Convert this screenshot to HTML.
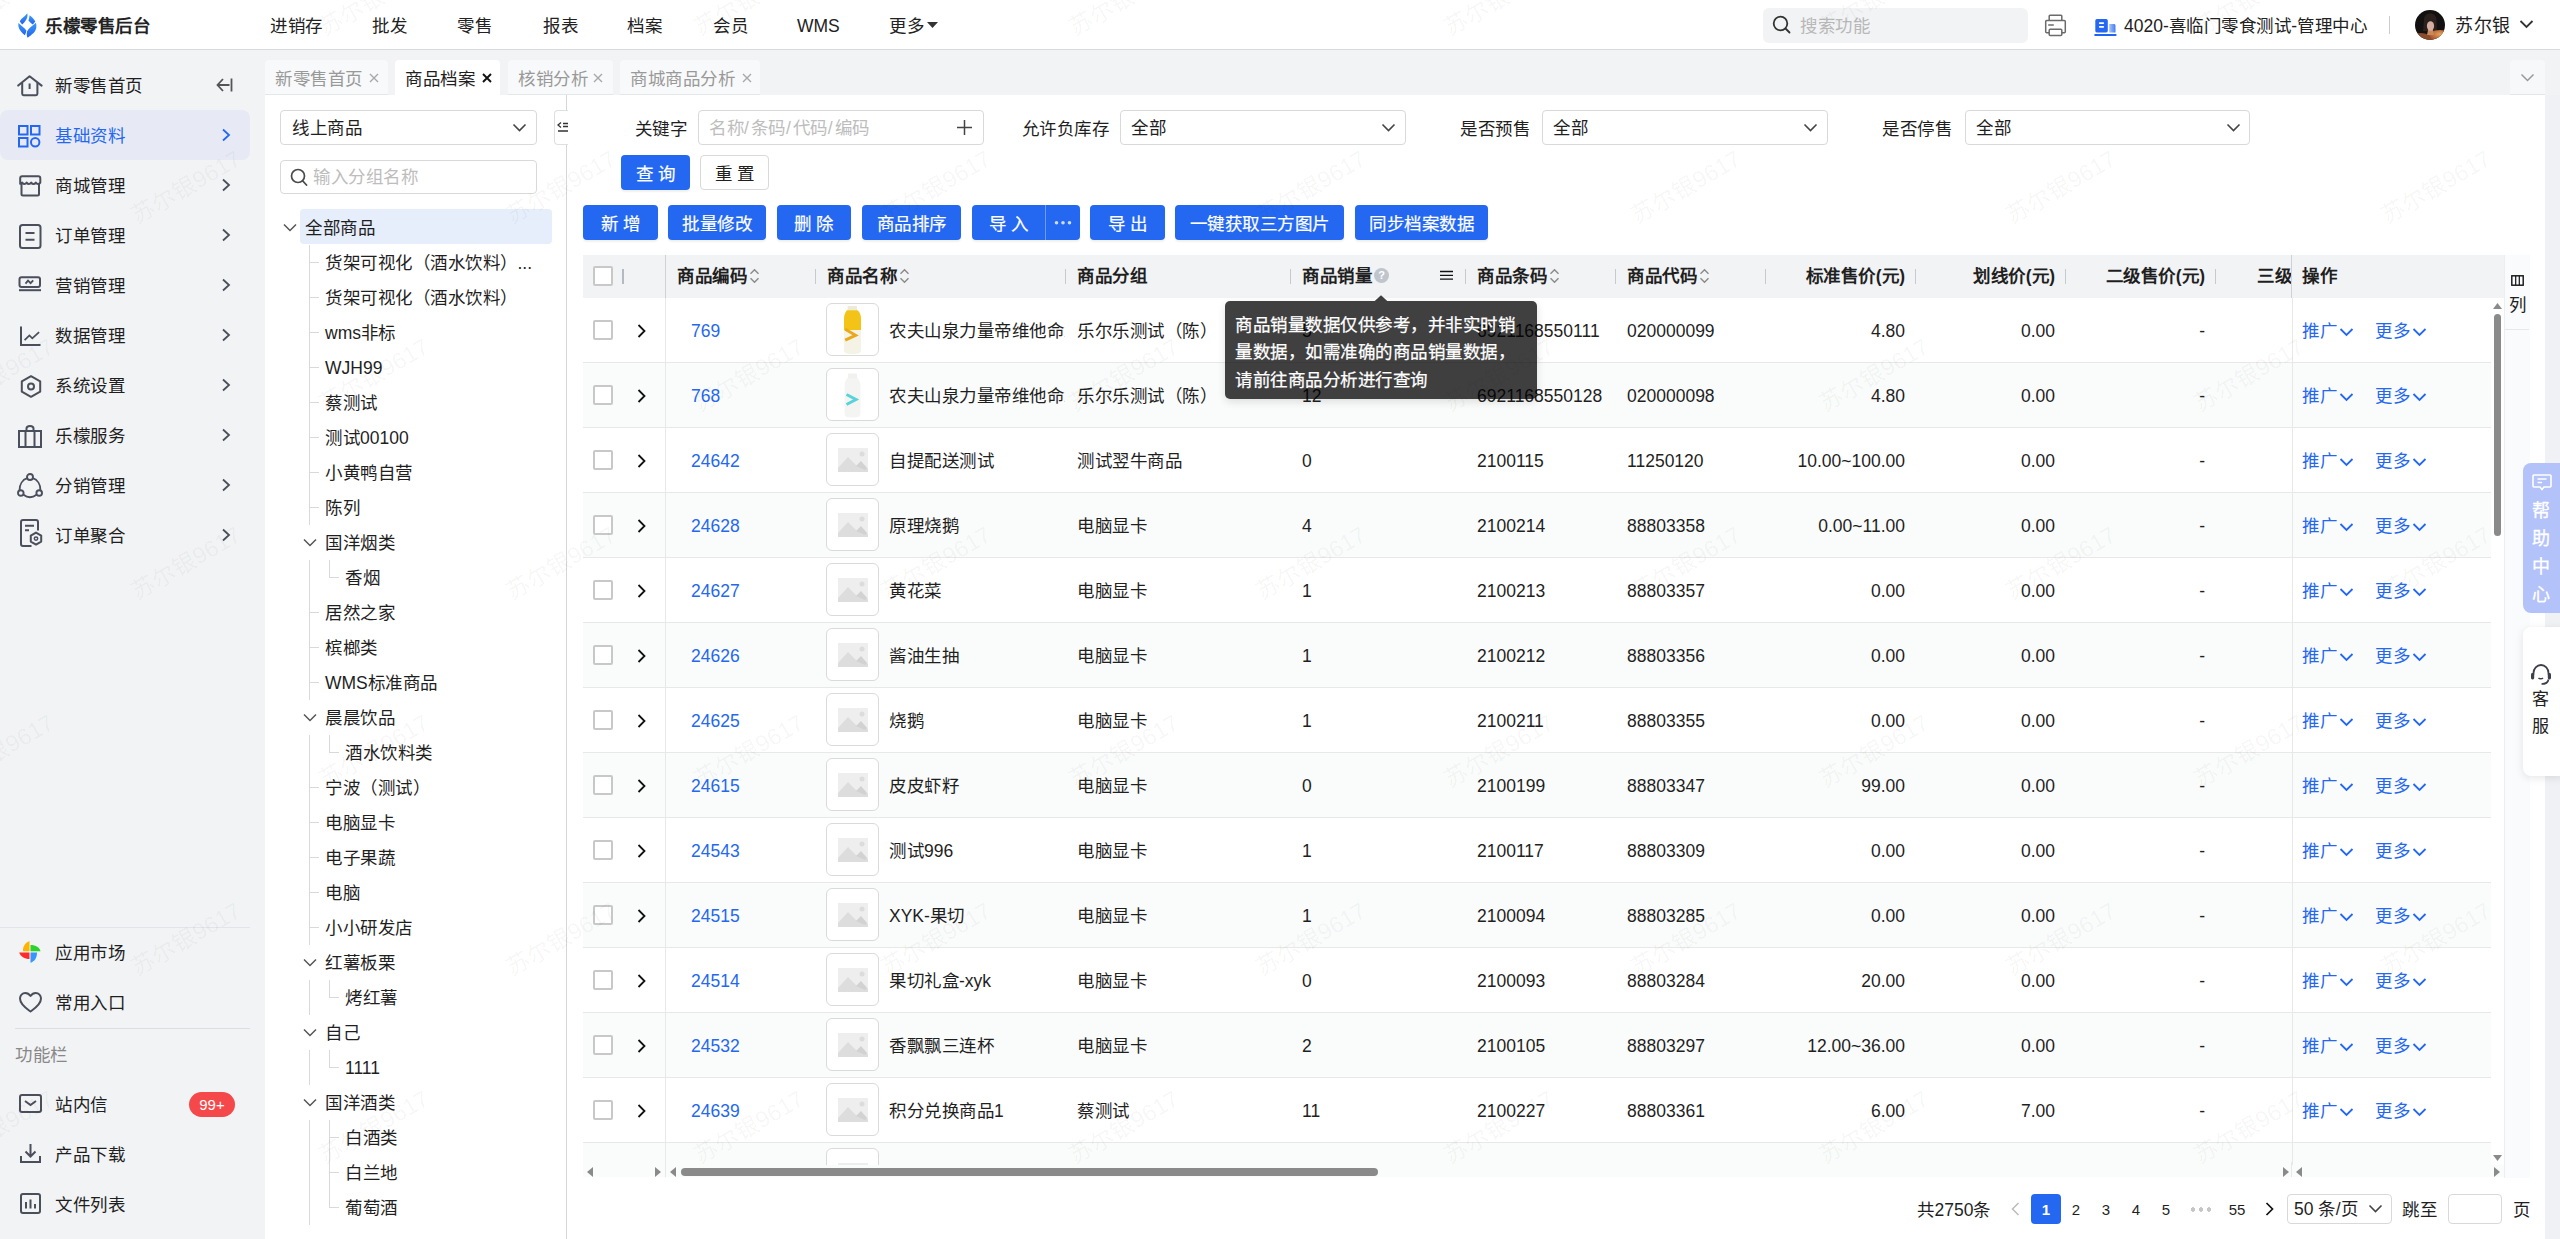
<!DOCTYPE html>
<html lang="zh-CN"><head><meta charset="utf-8">
<style>
*{box-sizing:border-box;margin:0;padding:0}
html,body{width:2560px;height:1239px;overflow:hidden;background:#f2f3f5;font-family:"Liberation Sans",sans-serif;font-size:17.5px;color:#1f1f1f}
.abs{position:absolute}
svg{display:block}
/* header */
#hdr{position:absolute;left:0;top:0;width:2560px;height:50px;background:#fff;border-bottom:1px solid #d9dadd}
.nav{position:absolute;top:0;height:49px;line-height:52px;font-size:17.5px;color:#222}
/* sidebar */
#side{position:absolute;left:0;top:50px;width:250px;height:1189px;background:#f2f3f5}
.mi{position:absolute;left:0;width:250px;height:50px;line-height:50px;font-size:17.5px;color:#1f1f1f}
.mi .ic{position:absolute;left:18px;top:14px}
.mi .tx{position:absolute;left:55px;top:1px}
.mi .ch{position:absolute;left:221px;top:18px}
.mi.act{background:#e7eaf5;border-radius:8px;color:#2468f2}
/* tabs */
.tab{position:absolute;top:60px;height:35px;line-height:38px;font-size:17.5px;color:#999;background:#f8f9fa;border-radius:4px 4px 0 0;border-bottom:1px solid #e4e6ea;padding-left:10px}
.tab.act{background:#fff;color:#1f1f1f;border-bottom:none}
.tab .x{position:absolute;top:0;font-size:18px}
/* content */
#content{position:absolute;left:265px;top:95px;width:2280px;height:1144px;background:#fff}
.inp{position:absolute;height:35px;border:1px solid #d9d9d9;border-radius:4px;background:#fff;font-size:17.5px;line-height:35px}
.btn{position:absolute;top:205px;height:35px;line-height:38px;background:#2468f2;color:#fff;-webkit-text-stroke:0.2px #fff;border-radius:4px;text-align:center;font-size:17.5px;box-shadow:0 2px 2px rgba(0,0,0,.06)}
.tree{position:absolute;height:35px;line-height:37px;font-size:17.5px;color:#1f1f1f;white-space:nowrap}
.vl{position:absolute;width:1px;background:#d9d9d9}
.hl{position:absolute;height:1px;background:#d9d9d9}
.c{letter-spacing:0.5px}
</style></head><body>

<!-- HEADER -->
<div id="hdr">
  <svg class="abs" style="left:18px;top:13px" width="20" height="25" viewBox="0 0 20 25"><defs><linearGradient id="lg" x1="0" y1="0" x2="0" y2="1"><stop offset="0" stop-color="#3d9bf8"/><stop offset="1" stop-color="#2262f0"/></linearGradient></defs>
<path d="M9.2 0.3C9.9 2.2 9.5 4.6 8.3 6.6C7 8.8 5.6 10.5 4.2 11.5L1.8 8.4C2.6 6.6 4.5 5 6.5 3.3C7.8 2.1 8.6 1.1 9.2 0.3Z" fill="url(#lg)"/>
<path d="M11.6 2.3C13.6 4 16.1 6.1 17.3 8.4L14.8 11.5C13 10.3 11.5 9 10.5 7.5C11 5.8 11.4 4 11.6 2.3Z" fill="url(#lg)"/>
<path d="M0.3 10C2.6 12 6.1 14.5 8.4 17.5C8.2 19.3 7.5 21 6.8 22.3C3.6 19.6 1 16.6 0.4 13.2Z" fill="url(#lg)"/>
<path d="M17.9 9.8C18.9 13 18.6 17 15.6 19.9C13.6 21.8 11 23.4 9.7 24.8C8.7 23.5 8.5 20.6 9 18.5C10.6 15.4 13.6 13.4 17.9 9.8Z" fill="url(#lg)"/></svg>
  <div class="abs" style="left:45px;top:0;line-height:52px;font-size:17.5px;font-weight:bold;color:#222"><span class="c">乐檬零售后台</span></div>
  <div class="nav" style="left:270px"><span class="c">进销存</span></div>
  <div class="nav" style="left:372px"><span class="c">批发</span></div>
  <div class="nav" style="left:457px"><span class="c">零售</span></div>
  <div class="nav" style="left:543px"><span class="c">报表</span></div>
  <div class="nav" style="left:627px"><span class="c">档案</span></div>
  <div class="nav" style="left:713px"><span class="c">会员</span></div>
  <div class="nav" style="left:797px">WMS</div>
  <div class="nav" style="left:889px"><span class="c">更多</span></div>
  <svg class="abs" style="left:927px;top:22px" width="11" height="6" viewBox="0 0 11 6"><path d="M0 0H11L5.5 6Z" fill="#333"/></svg>

  <div class="abs" style="left:1763px;top:8px;width:265px;height:35px;background:#f2f3f5;border-radius:6px"></div>
  <svg class="abs" style="left:1772px;top:15px" width="20" height="20" viewBox="0 0 20 20"><circle cx="8.5" cy="8.5" r="6.8" fill="none" stroke="#333" stroke-width="1.8"/><path d="M13.5 13.5L17.5 17.5" stroke="#333" stroke-width="1.8" stroke-linecap="round"/></svg>
  <div class="abs" style="left:1800px;top:0;line-height:52px;color:#b8b8b8"><span class="c">搜索功能</span></div>

  <svg class="abs" style="left:2044px;top:13px" width="24" height="24" viewBox="0 0 24 24"><path d="M5.2 7.3V3C5.2 2.5 5.6 2.2 6 2.2H17C17.4 2.2 17.8 2.5 17.8 3V7.3" fill="none" stroke="#6b6b6b" stroke-width="1.5"/><path d="M5 19.8H2.7C2 19.8 1.7 19.4 1.7 18.8V8.6C1.7 8 2.1 7.6 2.7 7.6H20.3C20.9 7.6 21.3 8 21.3 8.6V18.8C21.3 19.4 21 19.8 20.3 19.8H18" fill="none" stroke="#6b6b6b" stroke-width="1.5"/><rect x="5.2" y="16.2" width="12.6" height="6.3" rx="1" fill="none" stroke="#6b6b6b" stroke-width="1.5"/><path d="M4.2 12H9.8" stroke="#6b6b6b" stroke-width="1.5"/></svg>
  <svg class="abs" style="left:2094px;top:15px" width="24" height="22" viewBox="0 0 24 22"><defs><linearGradient id="sg" x1="0" y1="0" x2="1" y2="0"><stop offset="0" stop-color="#a9c4fb"/><stop offset="1" stop-color="#3f7ef5"/></linearGradient></defs><rect x="1.3" y="4.1" width="12.5" height="13.3" rx="1.6" fill="#2367f2"/><rect x="4.9" y="7.3" width="5.2" height="1.7" rx="0.8" fill="#fff"/><rect x="4.9" y="11" width="5.2" height="1.7" rx="0.8" fill="#fff"/><path d="M15.2 9H20C20.9 9 21.5 9.6 21.5 10.5V17.4H15.2Z" fill="url(#sg)"/><rect x="0.2" y="19" width="22.4" height="2" rx="1" fill="#1f63f2"/></svg>
  <div class="abs" style="left:2124px;top:0;line-height:52px;color:#222">4020-<span class="c">喜临门零食测试</span>-<span class="c">管理中心</span></div>
  <div class="abs" style="left:2389px;top:16px;width:1px;height:18px;background:#ccc"></div>
  <svg class="abs" style="left:2415px;top:10px" width="30" height="30" viewBox="0 0 30 30"><defs><clipPath id="avc"><circle cx="15" cy="15" r="15"/></clipPath><radialGradient id="avs" cx="0.5" cy="0.3" r="0.7"><stop offset="0" stop-color="#e7a35a"/><stop offset="0.6" stop-color="#a8552f"/><stop offset="1" stop-color="#5a2a18"/></radialGradient></defs><g clip-path="url(#avc)"><rect width="30" height="30" fill="#121010"/><path d="M9 10C9 5 12 3.5 15 3.5C19 3.5 22 6 21.5 11L22 21H8Z" fill="#2a201c"/><ellipse cx="25" cy="27" rx="13" ry="7" fill="url(#avs)"/><ellipse cx="6" cy="29" rx="10" ry="6" fill="#8a4a2c"/><path d="M13 20H18L19 25H12Z" fill="#c88a5a"/><ellipse cx="15.5" cy="16" rx="3.6" ry="4.8" fill="#d6ada3"/><path d="M11.5 12.5C12.5 9.5 18.5 9.5 19.5 12.5L19.5 11C18 8 13 8 11.5 11Z" fill="#2a201c"/></g></svg>
  <div class="abs" style="left:2455px;top:0;line-height:52px;color:#222;font-size:18px"><span class="c">苏尔银</span></div>
  <svg class="abs" style="left:2519px;top:19px" width="15" height="10" viewBox="0 0 15 10"><path d="M1.5 2L7.5 8L13.5 2" fill="none" stroke="#333" stroke-width="1.8"/></svg>
</div>

<!-- SIDEBAR -->
<div id="side">
<div class="mi" style="top:10px"><svg class="ic" style="top:15px;left:17px" width="26" height="22" viewBox="0 0 26 22"><path d="M1.2 10.6L12.6 1.2L24.6 10.6" fill="none" stroke="#4b4e5b" stroke-width="2" stroke-linejoin="round" stroke-linecap="round"/><path d="M5.2 8V18.8C5.2 19.6 5.8 20.2 6.6 20.2H19C19.8 20.2 20.4 19.6 20.4 18.8V8" fill="none" stroke="#4b4e5b" stroke-width="2"/><path d="M12.6 8.5V14" stroke="#4b4e5b" stroke-width="2"/></svg><span class="tx"><span class="c">新零售首页</span></span></div>
<div class="mi act" style="top:60px"><svg class="ic" style="top:15px;left:18px" width="23" height="23" viewBox="0 0 23 23"><rect x="1" y="1" width="8.5" height="8.5" fill="none" stroke="#2468f2" stroke-width="2"/><rect x="13" y="1" width="8.5" height="8.5" fill="none" stroke="#2468f2" stroke-width="2"/><rect x="1" y="13" width="8.5" height="8.5" fill="none" stroke="#2468f2" stroke-width="2"/><circle cx="17.2" cy="17.2" r="4.2" fill="none" stroke="#2468f2" stroke-width="2"/></svg><span class="tx"><span class="c">基础资料</span></span><svg class="ch" width="10" height="14" viewBox="0 0 10 14"><path d="M2 1.5L8 7L2 12.5" fill="none" stroke="#2468f2" stroke-width="1.8"/></svg></div>
<div class="mi" style="top:110px"><svg class="ic" style="top:15px;left:19px" width="23" height="22" viewBox="0 0 23 22"><path d="M2.5 8V19C2.5 20 3 20.5 4 20.5H18.5C19.5 20.5 20 20 20 19V8" fill="none" stroke="#4b4e5b" stroke-width="2"/><path d="M1.2 3.2C1.2 2 2 1.2 3.2 1.2H19.3C20.5 1.2 21.3 2 21.3 3.2V7.6C20 9.6 18 9.6 16.8 7.6C15.5 9.6 13.5 9.6 12.2 7.6C11 9.6 9 9.6 7.7 7.6C6.5 9.6 4.5 9.6 3.2 7.6L1.2 8.8Z" fill="none" stroke="#4b4e5b" stroke-width="2" stroke-linejoin="round"/></svg><span class="tx"><span class="c">商城管理</span></span><svg class="ch" width="10" height="14" viewBox="0 0 10 14"><path d="M2 1.5L8 7L2 12.5" fill="none" stroke="#4b4e5b" stroke-width="1.8"/></svg></div>
<div class="mi" style="top:160px"><svg class="ic" style="top:14px;left:19px" width="23" height="25" viewBox="0 0 23 25"><rect x="1" y="1" width="20.5" height="23" rx="2.5" fill="none" stroke="#4b4e5b" stroke-width="2"/><path d="M6.5 9H15.5M6.5 15.8H15.5" stroke="#4b4e5b" stroke-width="2"/></svg><span class="tx"><span class="c">订单管理</span></span><svg class="ch" width="10" height="14" viewBox="0 0 10 14"><path d="M2 1.5L8 7L2 12.5" fill="none" stroke="#4b4e5b" stroke-width="1.8"/></svg></div>
<div class="mi" style="top:210px"><svg class="ic" style="top:16px;left:18px" width="24" height="16" viewBox="0 0 24 16"><rect x="1.5" y="1.3" width="20.5" height="9.6" rx="2" fill="none" stroke="#4b4e5b" stroke-width="2"/><path d="M1 14.2H23" stroke="#4b4e5b" stroke-width="2"/><path d="M7.5 7.6L10 4.6L12.6 7.2L15.2 4.4" fill="none" stroke="#4b4e5b" stroke-width="1.8"/></svg><span class="tx"><span class="c">营销管理</span></span><svg class="ch" width="10" height="14" viewBox="0 0 10 14"><path d="M2 1.5L8 7L2 12.5" fill="none" stroke="#4b4e5b" stroke-width="1.8"/></svg></div>
<div class="mi" style="top:260px"><svg class="ic" style="top:16px;left:20px" width="21" height="21" viewBox="0 0 21 21"><path d="M1 0.6V19.1H20.5" fill="none" stroke="#4b4e5b" stroke-width="2"/><path d="M4.6 14.2L9.4 9.4L12.3 12.3L19.1 6.1" fill="none" stroke="#4b4e5b" stroke-width="1.8"/></svg><span class="tx"><span class="c">数据管理</span></span><svg class="ch" width="10" height="14" viewBox="0 0 10 14"><path d="M2 1.5L8 7L2 12.5" fill="none" stroke="#4b4e5b" stroke-width="1.8"/></svg></div>
<div class="mi" style="top:310px"><svg class="ic" style="top:15px;left:19.5px" width="22" height="23" viewBox="0 0 22 23"><path d="M11 1.2L20.2 6.3V16.7L11 21.8L1.8 16.7V6.3Z" fill="none" stroke="#4b4e5b" stroke-width="2" stroke-linejoin="round"/><circle cx="11" cy="11.5" r="3" fill="none" stroke="#4b4e5b" stroke-width="2"/></svg><span class="tx"><span class="c">系统设置</span></span><svg class="ch" width="10" height="14" viewBox="0 0 10 14"><path d="M2 1.5L8 7L2 12.5" fill="none" stroke="#4b4e5b" stroke-width="1.8"/></svg></div>
<div class="mi" style="top:360px"><svg class="ic" style="top:15px;left:18px" width="24" height="23" viewBox="0 0 24 23"><rect x="1" y="6" width="22" height="16" fill="none" stroke="#4b4e5b" stroke-width="2"/><path d="M7.5 6V22M16.5 6V22" stroke="#4b4e5b" stroke-width="2"/><path d="M8.5 6V3.5C8.5 2 10 1 12 1C14 1 15.5 2 15.5 3.5V6" fill="none" stroke="#4b4e5b" stroke-width="2"/></svg><span class="tx"><span class="c">乐檬服务</span></span><svg class="ch" width="10" height="14" viewBox="0 0 10 14"><path d="M2 1.5L8 7L2 12.5" fill="none" stroke="#4b4e5b" stroke-width="1.8"/></svg></div>
<div class="mi" style="top:410px"><svg class="ic" style="top:13px;left:17px" width="26" height="26" viewBox="0 0 26 26"><circle cx="13" cy="4" r="3" fill="none" stroke="#4b4e5b" stroke-width="1.9"/><circle cx="3.8" cy="20" r="2.8" fill="none" stroke="#4b4e5b" stroke-width="1.9"/><circle cx="22.2" cy="20" r="2.8" fill="none" stroke="#4b4e5b" stroke-width="1.9"/><path d="M10.2 5.2C5.5 6.8 2.5 11.5 2.6 17.2M15.8 5.2C20.5 6.8 23.5 11.5 23.4 17.2M6.5 21.8C10.5 24.8 15.5 24.8 19.5 21.8" fill="none" stroke="#4b4e5b" stroke-width="1.9"/></svg><span class="tx"><span class="c">分销管理</span></span><svg class="ch" width="10" height="14" viewBox="0 0 10 14"><path d="M2 1.5L8 7L2 12.5" fill="none" stroke="#4b4e5b" stroke-width="1.8"/></svg></div>
<div class="mi" style="top:460px"><svg class="ic" style="top:9px;left:19.5px" width="23" height="29" viewBox="0 0 23 29"><path d="M11.5 27H3C1.8 27 1 26.2 1 25V3C1 1.8 1.8 1 3 1H16C17.2 1 18 1.8 18 3V11.5" fill="none" stroke="#4b4e5b" stroke-width="2"/><path d="M5 6.8H14M5 11.2H9" stroke="#4b4e5b" stroke-width="2"/><path d="M16 13.6L21.2 16.6V22.6L16 25.6L10.8 22.6V16.6Z" fill="none" stroke="#4b4e5b" stroke-width="2" stroke-linejoin="round"/><circle cx="16" cy="19.6" r="1.7" fill="none" stroke="#4b4e5b" stroke-width="1.5"/></svg><span class="tx"><span class="c">订单聚合</span></span><svg class="ch" width="10" height="14" viewBox="0 0 10 14"><path d="M2 1.5L8 7L2 12.5" fill="none" stroke="#4b4e5b" stroke-width="1.8"/></svg></div>
<svg class="abs" style="left:216px;top:28px" width="17" height="14" viewBox="0 0 17 14"><path d="M7 1L1.5 7L7 13M1.5 7H13.5M15.5 0.5V13.5" fill="none" stroke="#555" stroke-width="1.8"/></svg>
<div class="abs" style="left:0;top:877px;width:250px;height:1px;background:#e2e4e9"></div>
<div class="mi" style="top:877px"><svg class="ic" style="top:14px;left:19px" width="22" height="22" viewBox="0 0 22 22"><path d="M10.5 0V10.2H3.9C3.9 5 6.5 1.5 10.5 0Z" fill="#ffb300"/><path d="M11.5 4V10.2H21.5C20.5 6.5 17 4 11.5 4Z" fill="#2ad42a"/><path d="M18 11.5H11.5V21.7C15.5 20.5 18 17 18 11.5Z" fill="#3596fe"/><path d="M0.2 11.5H10.5V18C5.5 18 1.5 15.5 0.2 11.5Z" fill="#ff2b2b"/></svg><span class="tx"><span class="c">应用市场</span></span></div>
<div class="mi" style="top:927px"><svg class="ic" style="top:15px;left:19px" width="23" height="21" viewBox="0 0 23 21"><path d="M11.5 19.5C8 17 1 12.5 1 6.5C1 3.5 3.3 1 6.3 1C8.5 1 10.3 2.3 11.5 4C12.7 2.3 14.5 1 16.7 1C19.7 1 22 3.5 22 6.5C22 12.5 15 17 11.5 19.5Z" fill="none" stroke="#4b4e5b" stroke-width="2" stroke-linejoin="round"/></svg><span class="tx"><span class="c">常用入口</span></span></div>
<div class="abs" style="left:15px;top:978px;width:235px;height:1px;background:#dcdee3"></div>
<div class="abs" style="left:15px;top:980px;line-height:50px;color:#888;font-size:17.5px"><span class="c">功能栏</span></div>
<div class="mi" style="top:1029px"><svg class="ic" style="top:15px;left:19px" width="23" height="19" viewBox="0 0 23 19"><rect x="1" y="1" width="21" height="17" rx="2" fill="none" stroke="#4b4e5b" stroke-width="2"/><path d="M6 7L11.5 11L17 7" fill="none" stroke="#4b4e5b" stroke-width="2"/></svg><span class="tx"><span class="c">站内信</span></span><div class="abs" style="left:189px;top:13px;width:46px;height:25px;border-radius:13px;background:#f5484a;color:#fff;font-size:15px;line-height:25px;text-align:center">99+</div></div>
<div class="mi" style="top:1079px"><svg class="ic" style="top:14px;left:20px" width="21" height="21" viewBox="0 0 21 21"><path d="M10.5 1V13M5.5 8.5L10.5 13.5L15.5 8.5" fill="none" stroke="#4b4e5b" stroke-width="2"/><path d="M1 13V19H20V13" fill="none" stroke="#4b4e5b" stroke-width="2"/></svg><span class="tx"><span class="c">产品下载</span></span></div>
<div class="mi" style="top:1129px"><svg class="ic" style="top:14px;left:20px" width="21" height="21" viewBox="0 0 21 21"><rect x="1" y="1" width="19" height="19" rx="2" fill="none" stroke="#4b4e5b" stroke-width="2"/><path d="M6 9V15.5M10.5 6.5V15.5M15 11V15.5" stroke="#4b4e5b" stroke-width="2"/></svg><span class="tx"><span class="c">文件列表</span></span></div>
</div>

<!-- TABS -->
<div class="tab" style="left:265px;width:123px"><span class="c">新零售首页</span></div>
<div class="tab act" style="left:395px;width:105px"><span class="c">商品档案</span></div>
<div class="tab" style="left:508px;width:105px"><span class="c">核销分析</span></div>
<div class="tab" style="left:620px;width:140px"><span class="c">商城商品分析</span></div>
<svg class="abs" style="left:369px;top:73px" width="10" height="10" viewBox="0 0 10 10"><path d="M1 1L9 9M9 1L1 9" stroke="#a8a8a8" stroke-width="1.4"/></svg><svg class="abs" style="left:482px;top:73px" width="10" height="10" viewBox="0 0 10 10"><path d="M1 1L9 9M9 1L1 9" stroke="#111" stroke-width="1.9"/></svg><svg class="abs" style="left:593px;top:73px" width="10" height="10" viewBox="0 0 10 10"><path d="M1 1L9 9M9 1L1 9" stroke="#a8a8a8" stroke-width="1.4"/></svg><svg class="abs" style="left:742px;top:73px" width="10" height="10" viewBox="0 0 10 10"><path d="M1 1L9 9M9 1L1 9" stroke="#a8a8a8" stroke-width="1.4"/></svg>
<div class="abs" style="left:2510px;top:60px;width:35px;height:35px;background:#f7f8fa;border-radius:4px 4px 0 0;border-bottom:1px solid #e4e6ea"></div>
<svg class="abs" style="left:2520px;top:73px" width="15" height="9" viewBox="0 0 15 9"><path d="M1.5 1.5L7.5 7.5L13.5 1.5" fill="none" stroke="#999" stroke-width="1.5"/></svg>

<!-- CONTENT -->
<div id="content"></div>
<div class="abs" style="left:566px;top:95px;width:1px;height:1144px;background:#d6d6d6"></div>
<div class="inp" style="left:280px;top:110px;width:257px"><span class="abs" style="left:11px;top:0"><span class="c">线上商品</span></span><svg class="abs" style="left:231px;top:12px" width="15" height="9" viewBox="0 0 15 9"><path d="M1.5 1.5L7.5 7.5L13.5 1.5" fill="none" stroke="#444" stroke-width="1.6"/></svg></div>
<div class="abs" style="left:554px;top:110px;width:14px;height:35px;background:#fff;border:1px solid #dcdfe6;border-right:none;border-radius:4px 0 0 4px"></div>
<svg class="abs" style="left:557px;top:121px" width="11" height="12" viewBox="0 0 11 12"><path d="M4 1.5L1 4L4 6.5" fill="none" stroke="#333" stroke-width="1.3"/><path d="M6 2.5H11M6 5.5H11M1 10H11" stroke="#333" stroke-width="1.5"/></svg>
<div class="inp" style="left:280px;top:160px;width:257px;height:34px"></div>
<svg class="abs" style="left:290px;top:168px" width="18" height="19" viewBox="0 0 18 19"><circle cx="8" cy="8" r="6.5" fill="none" stroke="#4a4a4a" stroke-width="1.7"/><path d="M12.8 13L16.5 17" stroke="#4a4a4a" stroke-width="1.8" stroke-linecap="round"/></svg>
<div class="abs" style="left:313px;top:160px;line-height:34px;color:#bdbdbd"><span class="c">输入分组名称</span></div>
<div class="abs" style="left:300px;top:209px;width:252px;height:35px;background:#e6edfb;border-radius:4px"></div>
<svg class="abs" style="left:283px;top:223px" width="14" height="9" viewBox="0 0 14 9"><path d="M1 1.5L7 7.5L13 1.5" fill="none" stroke="#555" stroke-width="1.5"/></svg>
<div class="tree" style="left:305px;top:210px"><span class="c">全部商品</span></div>
<div class="vl" style="left:309px;top:245px;height:35px;background:#d9d9d9"></div>
<div class="hl" style="left:310px;top:262px;width:9px;background:#d9d9d9"></div>
<div class="tree" style="left:325px;top:245px"><span class="c">货架可视化（酒水饮料）</span>...</div>
<div class="vl" style="left:309px;top:280px;height:35px;background:#d9d9d9"></div>
<div class="hl" style="left:310px;top:297px;width:9px;background:#d9d9d9"></div>
<div class="tree" style="left:325px;top:280px"><span class="c">货架可视化（酒水饮料）</span></div>
<div class="vl" style="left:309px;top:315px;height:35px;background:#d9d9d9"></div>
<div class="hl" style="left:310px;top:332px;width:9px;background:#d9d9d9"></div>
<div class="tree" style="left:325px;top:315px">wms<span class="c">非标</span></div>
<div class="vl" style="left:309px;top:350px;height:35px;background:#d9d9d9"></div>
<div class="hl" style="left:310px;top:367px;width:9px;background:#d9d9d9"></div>
<div class="tree" style="left:325px;top:350px">WJH99</div>
<div class="vl" style="left:309px;top:385px;height:35px;background:#d9d9d9"></div>
<div class="hl" style="left:310px;top:402px;width:9px;background:#d9d9d9"></div>
<div class="tree" style="left:325px;top:385px"><span class="c">蔡测试</span></div>
<div class="vl" style="left:309px;top:420px;height:35px;background:#d9d9d9"></div>
<div class="hl" style="left:310px;top:437px;width:9px;background:#d9d9d9"></div>
<div class="tree" style="left:325px;top:420px"><span class="c">测试</span>00100</div>
<div class="vl" style="left:309px;top:455px;height:35px;background:#d9d9d9"></div>
<div class="hl" style="left:310px;top:472px;width:9px;background:#d9d9d9"></div>
<div class="tree" style="left:325px;top:455px"><span class="c">小黄鸭自营</span></div>
<div class="vl" style="left:309px;top:490px;height:35px;background:#d9d9d9"></div>
<div class="hl" style="left:310px;top:507px;width:9px;background:#d9d9d9"></div>
<div class="tree" style="left:325px;top:490px"><span class="c">陈列</span></div>
<svg class="abs" style="left:303px;top:538px" width="14" height="9" viewBox="0 0 14 9"><path d="M1 1.5L7 7.5L13 1.5" fill="none" stroke="#555" stroke-width="1.5"/></svg>
<div class="tree" style="left:325px;top:525px"><span class="c">国洋烟类</span></div>
<div class="vl" style="left:309px;top:560px;height:35px;background:#d9d9d9"></div>
<div class="vl" style="left:329px;top:560px;height:18px;background:#d9d9d9"></div>
<div class="hl" style="left:330px;top:577px;width:9px;background:#d9d9d9"></div>
<div class="tree" style="left:345px;top:560px"><span class="c">香烟</span></div>
<div class="vl" style="left:309px;top:595px;height:35px;background:#d9d9d9"></div>
<div class="hl" style="left:310px;top:612px;width:9px;background:#d9d9d9"></div>
<div class="tree" style="left:325px;top:595px"><span class="c">居然之家</span></div>
<div class="vl" style="left:309px;top:630px;height:35px;background:#d9d9d9"></div>
<div class="hl" style="left:310px;top:647px;width:9px;background:#d9d9d9"></div>
<div class="tree" style="left:325px;top:630px"><span class="c">槟榔类</span></div>
<div class="vl" style="left:309px;top:665px;height:35px;background:#d9d9d9"></div>
<div class="hl" style="left:310px;top:682px;width:9px;background:#d9d9d9"></div>
<div class="tree" style="left:325px;top:665px">WMS<span class="c">标准商品</span></div>
<svg class="abs" style="left:303px;top:713px" width="14" height="9" viewBox="0 0 14 9"><path d="M1 1.5L7 7.5L13 1.5" fill="none" stroke="#555" stroke-width="1.5"/></svg>
<div class="tree" style="left:325px;top:700px"><span class="c">晨晨饮品</span></div>
<div class="vl" style="left:309px;top:735px;height:35px;background:#d9d9d9"></div>
<div class="vl" style="left:329px;top:735px;height:18px;background:#d9d9d9"></div>
<div class="hl" style="left:330px;top:752px;width:9px;background:#d9d9d9"></div>
<div class="tree" style="left:345px;top:735px"><span class="c">酒水饮料类</span></div>
<div class="vl" style="left:309px;top:770px;height:35px;background:#d9d9d9"></div>
<div class="hl" style="left:310px;top:787px;width:9px;background:#d9d9d9"></div>
<div class="tree" style="left:325px;top:770px"><span class="c">宁波（测试）</span></div>
<div class="vl" style="left:309px;top:805px;height:35px;background:#d9d9d9"></div>
<div class="hl" style="left:310px;top:822px;width:9px;background:#d9d9d9"></div>
<div class="tree" style="left:325px;top:805px"><span class="c">电脑显卡</span></div>
<div class="vl" style="left:309px;top:840px;height:35px;background:#d9d9d9"></div>
<div class="hl" style="left:310px;top:857px;width:9px;background:#d9d9d9"></div>
<div class="tree" style="left:325px;top:840px"><span class="c">电子果蔬</span></div>
<div class="vl" style="left:309px;top:875px;height:35px;background:#d9d9d9"></div>
<div class="hl" style="left:310px;top:892px;width:9px;background:#d9d9d9"></div>
<div class="tree" style="left:325px;top:875px"><span class="c">电脑</span></div>
<div class="vl" style="left:309px;top:910px;height:35px;background:#d9d9d9"></div>
<div class="hl" style="left:310px;top:927px;width:9px;background:#d9d9d9"></div>
<div class="tree" style="left:325px;top:910px"><span class="c">小小研发店</span></div>
<svg class="abs" style="left:303px;top:958px" width="14" height="9" viewBox="0 0 14 9"><path d="M1 1.5L7 7.5L13 1.5" fill="none" stroke="#555" stroke-width="1.5"/></svg>
<div class="tree" style="left:325px;top:945px"><span class="c">红薯板栗</span></div>
<div class="vl" style="left:309px;top:980px;height:35px;background:#d9d9d9"></div>
<div class="vl" style="left:329px;top:980px;height:18px;background:#d9d9d9"></div>
<div class="hl" style="left:330px;top:997px;width:9px;background:#d9d9d9"></div>
<div class="tree" style="left:345px;top:980px"><span class="c">烤红薯</span></div>
<svg class="abs" style="left:303px;top:1028px" width="14" height="9" viewBox="0 0 14 9"><path d="M1 1.5L7 7.5L13 1.5" fill="none" stroke="#555" stroke-width="1.5"/></svg>
<div class="tree" style="left:325px;top:1015px"><span class="c">自己</span></div>
<div class="vl" style="left:309px;top:1050px;height:35px;background:#d9d9d9"></div>
<div class="vl" style="left:329px;top:1050px;height:18px;background:#d9d9d9"></div>
<div class="hl" style="left:330px;top:1067px;width:9px;background:#d9d9d9"></div>
<div class="tree" style="left:345px;top:1050px">1111</div>
<svg class="abs" style="left:303px;top:1098px" width="14" height="9" viewBox="0 0 14 9"><path d="M1 1.5L7 7.5L13 1.5" fill="none" stroke="#555" stroke-width="1.5"/></svg>
<div class="tree" style="left:325px;top:1085px"><span class="c">国洋酒类</span></div>
<div class="vl" style="left:309px;top:1120px;height:35px;background:#d9d9d9"></div>
<div class="vl" style="left:329px;top:1120px;height:35px;background:#d9d9d9"></div>
<div class="hl" style="left:330px;top:1137px;width:9px;background:#d9d9d9"></div>
<div class="tree" style="left:345px;top:1120px"><span class="c">白酒类</span></div>
<div class="vl" style="left:309px;top:1155px;height:35px;background:#d9d9d9"></div>
<div class="vl" style="left:329px;top:1155px;height:35px;background:#d9d9d9"></div>
<div class="hl" style="left:330px;top:1172px;width:9px;background:#d9d9d9"></div>
<div class="tree" style="left:345px;top:1155px"><span class="c">白兰地</span></div>
<div class="vl" style="left:309px;top:1190px;height:35px;background:#d9d9d9"></div>
<div class="vl" style="left:329px;top:1190px;height:18px;background:#d9d9d9"></div>
<div class="hl" style="left:330px;top:1207px;width:9px;background:#d9d9d9"></div>
<div class="tree" style="left:345px;top:1190px"><span class="c">葡萄酒</span></div>
<div class="abs" style="left:487px;width:200px;text-align:right;top:112px;line-height:35px"><span class="c">关键字</span></div>
<div class="inp" style="left:698px;top:110px;width:286px"><span class="abs" style="left:10px;top:0;color:#bdbdbd"><span class="c">名称</span><span style="letter-spacing:2px">/</span><span class="c">条码</span><span style="letter-spacing:2px">/</span><span class="c">代码</span><span style="letter-spacing:2px">/</span><span class="c">编码</span></span></div>
<svg class="abs" style="left:957px;top:120px" width="15" height="15" viewBox="0 0 15 15"><path d="M7.5 0V15M0 7.5H15" stroke="#444" stroke-width="1.5"/></svg>
<div class="abs" style="left:909px;width:200px;text-align:right;top:112px;line-height:35px"><span class="c">允许负库存</span></div>
<div class="inp" style="left:1120px;top:110px;width:286px"><span class="abs" style="left:10px;top:0"><span class="c">全部</span></span></div>
<svg class="abs" style="left:1381px;top:123px" width="15" height="9" viewBox="0 0 15 9"><path d="M1.5 1.5L7.5 7.5L13.5 1.5" fill="none" stroke="#444" stroke-width="1.6"/></svg>
<div class="abs" style="left:1330px;width:200px;text-align:right;top:112px;line-height:35px"><span class="c">是否预售</span></div>
<div class="inp" style="left:1542px;top:110px;width:286px"><span class="abs" style="left:10px;top:0"><span class="c">全部</span></span></div>
<svg class="abs" style="left:1803px;top:123px" width="15" height="9" viewBox="0 0 15 9"><path d="M1.5 1.5L7.5 7.5L13.5 1.5" fill="none" stroke="#444" stroke-width="1.6"/></svg>
<div class="abs" style="left:1752px;width:200px;text-align:right;top:112px;line-height:35px"><span class="c">是否停售</span></div>
<div class="inp" style="left:1965px;top:110px;width:285px"><span class="abs" style="left:10px;top:0"><span class="c">全部</span></span></div>
<svg class="abs" style="left:2226px;top:123px" width="15" height="9" viewBox="0 0 15 9"><path d="M1.5 1.5L7.5 7.5L13.5 1.5" fill="none" stroke="#444" stroke-width="1.6"/></svg>
<div class="btn" style="left:621px;top:155px;width:69px"><span class="c">查</span> <span class="c">询</span></div>
<div class="btn" style="left:700px;top:155px;width:69px;background:#fff;color:#1f1f1f;border:1px solid #d9d9d9;line-height:36px;box-shadow:none;-webkit-text-stroke:0"><span class="c">重</span> <span class="c">置</span></div>
<div class="btn" style="left:583px;width:75px"><span class="c">新</span> <span class="c">增</span></div>
<div class="btn" style="left:668px;width:98px"><span class="c">批量修改</span></div>
<div class="btn" style="left:777px;width:74px"><span class="c">删</span> <span class="c">除</span></div>
<div class="btn" style="left:862px;width:99px"><span class="c">商品排序</span></div>
<div class="btn" style="left:972px;width:73px;border-radius:4px 0 0 4px"><span class="c">导</span> <span class="c">入</span></div>
<div class="btn" style="left:1090px;width:75px"><span class="c">导</span> <span class="c">出</span></div>
<div class="btn" style="left:1175px;width:169px"><span class="c">一键获取三方图片</span></div>
<div class="btn" style="left:1355px;width:133px"><span class="c">同步档案数据</span></div>
<div class="btn" style="left:1045px;width:35px;border-radius:0 4px 4px 0;border-left:1px solid #6d9cf6"></div>
<svg class="abs" style="left:1052px;top:219px" width="22" height="8" viewBox="0 0 22 8"><circle cx="4.5" cy="3.8" r="1.8" fill="#cddbfb"/><circle cx="11" cy="3.8" r="1.8" fill="#cddbfb"/><circle cx="17.5" cy="3.8" r="1.8" fill="#cddbfb"/></svg>

<div class="abs" style="left:583px;top:255px;width:1921px;height:43px;background:#f2f3f5"></div>
<div class="abs" style="left:583px;top:298px;width:1908px;height:867px;overflow:hidden">
<div class="abs" style="left:0;top:0px;width:1908px;height:65px;background:#fff;border-bottom:1px solid #e8e8e8"></div>
<div class="abs" style="left:10px;top:22px;width:20px;height:20px;border:2px solid #c8c8c8;border-radius:2px;background:#fff"></div>
<svg class="abs" style="left:54px;top:26px" width="10" height="14" viewBox="0 0 10 14"><path d="M1.5 1L7.5 7L1.5 13" fill="none" stroke="#111" stroke-width="1.8"/></svg>
<div style="top:1px;line-height:65px;white-space:nowrap;position:absolute;left:108px;color:#2468f2">769</div>
<div class="abs" style="left:243px;top:5px;width:53px;height:53px;border:1px solid #dadada;border-radius:6px;background:#fff;overflow:hidden"><svg class="abs" style="left:13px;top:1px" width="26" height="50" viewBox="0 0 26 50"><rect x="7.6" y="0.9" width="9.4" height="5" rx="1.2" fill="#ecead8"/><path d="M7 5.3H17.5C20 7.5 21 10.5 21 14V45.5C21 48 18.5 49 12.5 49C6.5 49 4 48 4 45.5V14C4 10.5 5 7.5 7 5.3Z" fill="#f5f3e6"/><path d="M7 5.3H17.5C20 7.5 21 10.5 21 14V25H4V14C4 10.5 5 7.5 7 5.3Z" fill="#f3c417"/><path d="M5.2 24.3L15.6 30.3L5.2 35.2" fill="none" stroke="#e9a91a" stroke-width="3"/></svg></div>
<div style="top:1px;line-height:65px;white-space:nowrap;position:absolute;left:306px;width:176px;overflow:hidden"><span class="c">农夫山泉力量帝维他命水</span></div>
<div style="top:1px;line-height:65px;white-space:nowrap;position:absolute;left:494px;width:200px;overflow:hidden"><span class="c">乐尔乐测试（陈）</span></div>
<div style="top:1px;line-height:65px;white-space:nowrap;position:absolute;left:719px">5</div>
<div style="top:1px;line-height:65px;white-space:nowrap;position:absolute;left:894px">6921168550111</div>
<div style="top:1px;line-height:65px;white-space:nowrap;position:absolute;left:1044px">020000099</div>
<div style="top:1px;line-height:65px;white-space:nowrap;position:absolute;left:1122px;width:200px;text-align:right">4.80</div>
<div style="top:1px;line-height:65px;white-space:nowrap;position:absolute;left:1272px;width:200px;text-align:right">0.00</div>
<div style="top:1px;line-height:65px;white-space:nowrap;position:absolute;left:1422px;width:200px;text-align:right">-</div>
<div style="top:1px;line-height:65px;white-space:nowrap;position:absolute;left:1719px;color:#2468f2"><span class="c">推广</span></div>
<svg class="abs" style="left:1756px;top:29px" width="15" height="10" viewBox="0 0 15 10"><path d="M1.5 2L7.5 8L13.5 2" fill="none" stroke="#2468f2" stroke-width="1.8"/></svg>
<div style="top:1px;line-height:65px;white-space:nowrap;position:absolute;left:1792px;color:#2468f2"><span class="c">更多</span></div>
<svg class="abs" style="left:1829px;top:29px" width="15" height="10" viewBox="0 0 15 10"><path d="M1.5 2L7.5 8L13.5 2" fill="none" stroke="#2468f2" stroke-width="1.8"/></svg>
<div class="abs" style="left:0;top:65px;width:1908px;height:65px;background:#fafbfb;border-bottom:1px solid #e8e8e8"></div>
<div class="abs" style="left:10px;top:87px;width:20px;height:20px;border:2px solid #c8c8c8;border-radius:2px;background:#fff"></div>
<svg class="abs" style="left:54px;top:91px" width="10" height="14" viewBox="0 0 10 14"><path d="M1.5 1L7.5 7L1.5 13" fill="none" stroke="#111" stroke-width="1.8"/></svg>
<div style="top:66px;line-height:65px;white-space:nowrap;position:absolute;left:108px;color:#2468f2">768</div>
<div class="abs" style="left:243px;top:70px;width:53px;height:53px;border:1px solid #dadada;border-radius:6px;background:#fff;overflow:hidden"><svg class="abs" style="left:13px;top:1px" width="26" height="50" viewBox="0 0 26 50"><rect x="8" y="3.5" width="9" height="5" rx="1.2" fill="#f1f1ef"/><path d="M7.5 8H17.5C19.5 10 20.5 13 20.5 16V44C20.5 46.5 18 47.5 12.5 47.5C7 47.5 4.5 46.5 4.5 44V16C4.5 13 5.5 10 7.5 8Z" fill="#f4f5f3"/><path d="M6.5 24.5L16 29.5L6.5 34.5" fill="none" stroke="#58d3d9" stroke-width="3"/></svg></div>
<div style="top:66px;line-height:65px;white-space:nowrap;position:absolute;left:306px;width:176px;overflow:hidden"><span class="c">农夫山泉力量帝维他命水</span></div>
<div style="top:66px;line-height:65px;white-space:nowrap;position:absolute;left:494px;width:200px;overflow:hidden"><span class="c">乐尔乐测试（陈）</span></div>
<div style="top:66px;line-height:65px;white-space:nowrap;position:absolute;left:719px">12</div>
<div style="top:66px;line-height:65px;white-space:nowrap;position:absolute;left:894px">6921168550128</div>
<div style="top:66px;line-height:65px;white-space:nowrap;position:absolute;left:1044px">020000098</div>
<div style="top:66px;line-height:65px;white-space:nowrap;position:absolute;left:1122px;width:200px;text-align:right">4.80</div>
<div style="top:66px;line-height:65px;white-space:nowrap;position:absolute;left:1272px;width:200px;text-align:right">0.00</div>
<div style="top:66px;line-height:65px;white-space:nowrap;position:absolute;left:1422px;width:200px;text-align:right">-</div>
<div style="top:66px;line-height:65px;white-space:nowrap;position:absolute;left:1719px;color:#2468f2"><span class="c">推广</span></div>
<svg class="abs" style="left:1756px;top:94px" width="15" height="10" viewBox="0 0 15 10"><path d="M1.5 2L7.5 8L13.5 2" fill="none" stroke="#2468f2" stroke-width="1.8"/></svg>
<div style="top:66px;line-height:65px;white-space:nowrap;position:absolute;left:1792px;color:#2468f2"><span class="c">更多</span></div>
<svg class="abs" style="left:1829px;top:94px" width="15" height="10" viewBox="0 0 15 10"><path d="M1.5 2L7.5 8L13.5 2" fill="none" stroke="#2468f2" stroke-width="1.8"/></svg>
<div class="abs" style="left:0;top:130px;width:1908px;height:65px;background:#fff;border-bottom:1px solid #e8e8e8"></div>
<div class="abs" style="left:10px;top:152px;width:20px;height:20px;border:2px solid #c8c8c8;border-radius:2px;background:#fff"></div>
<svg class="abs" style="left:54px;top:156px" width="10" height="14" viewBox="0 0 10 14"><path d="M1.5 1L7.5 7L1.5 13" fill="none" stroke="#111" stroke-width="1.8"/></svg>
<div style="top:131px;line-height:65px;white-space:nowrap;position:absolute;left:108px;color:#2468f2">24642</div>
<div class="abs" style="left:243px;top:135px;width:53px;height:53px;border:1px solid #dadada;border-radius:6px;background:#fff;overflow:hidden"><svg class="abs" style="left:11px;top:14px" width="30" height="24" viewBox="0 0 30 24"><rect width="30" height="24" fill="#eeeeee"/><path d="M0 20L10 9L19 18L23 14L30 21V24H0Z" fill="#dddddd"/><path d="M18 18L23 13L29 20L27 22Z" fill="#d2d2d2"/><circle cx="24" cy="6" r="2.5" fill="#dcdcdc"/></svg></div>
<div style="top:131px;line-height:65px;white-space:nowrap;position:absolute;left:306px;width:176px;overflow:hidden"><span class="c">自提配送测试</span></div>
<div style="top:131px;line-height:65px;white-space:nowrap;position:absolute;left:494px;width:200px;overflow:hidden"><span class="c">测试翌牛商品</span></div>
<div style="top:131px;line-height:65px;white-space:nowrap;position:absolute;left:719px">0</div>
<div style="top:131px;line-height:65px;white-space:nowrap;position:absolute;left:894px">2100115</div>
<div style="top:131px;line-height:65px;white-space:nowrap;position:absolute;left:1044px">11250120</div>
<div style="top:131px;line-height:65px;white-space:nowrap;position:absolute;left:1122px;width:200px;text-align:right">10.00~100.00</div>
<div style="top:131px;line-height:65px;white-space:nowrap;position:absolute;left:1272px;width:200px;text-align:right">0.00</div>
<div style="top:131px;line-height:65px;white-space:nowrap;position:absolute;left:1422px;width:200px;text-align:right">-</div>
<div style="top:131px;line-height:65px;white-space:nowrap;position:absolute;left:1719px;color:#2468f2"><span class="c">推广</span></div>
<svg class="abs" style="left:1756px;top:159px" width="15" height="10" viewBox="0 0 15 10"><path d="M1.5 2L7.5 8L13.5 2" fill="none" stroke="#2468f2" stroke-width="1.8"/></svg>
<div style="top:131px;line-height:65px;white-space:nowrap;position:absolute;left:1792px;color:#2468f2"><span class="c">更多</span></div>
<svg class="abs" style="left:1829px;top:159px" width="15" height="10" viewBox="0 0 15 10"><path d="M1.5 2L7.5 8L13.5 2" fill="none" stroke="#2468f2" stroke-width="1.8"/></svg>
<div class="abs" style="left:0;top:195px;width:1908px;height:65px;background:#fafbfb;border-bottom:1px solid #e8e8e8"></div>
<div class="abs" style="left:10px;top:217px;width:20px;height:20px;border:2px solid #c8c8c8;border-radius:2px;background:#fff"></div>
<svg class="abs" style="left:54px;top:221px" width="10" height="14" viewBox="0 0 10 14"><path d="M1.5 1L7.5 7L1.5 13" fill="none" stroke="#111" stroke-width="1.8"/></svg>
<div style="top:196px;line-height:65px;white-space:nowrap;position:absolute;left:108px;color:#2468f2">24628</div>
<div class="abs" style="left:243px;top:200px;width:53px;height:53px;border:1px solid #dadada;border-radius:6px;background:#fff;overflow:hidden"><svg class="abs" style="left:11px;top:14px" width="30" height="24" viewBox="0 0 30 24"><rect width="30" height="24" fill="#eeeeee"/><path d="M0 20L10 9L19 18L23 14L30 21V24H0Z" fill="#dddddd"/><path d="M18 18L23 13L29 20L27 22Z" fill="#d2d2d2"/><circle cx="24" cy="6" r="2.5" fill="#dcdcdc"/></svg></div>
<div style="top:196px;line-height:65px;white-space:nowrap;position:absolute;left:306px;width:176px;overflow:hidden"><span class="c">原理烧鹅</span></div>
<div style="top:196px;line-height:65px;white-space:nowrap;position:absolute;left:494px;width:200px;overflow:hidden"><span class="c">电脑显卡</span></div>
<div style="top:196px;line-height:65px;white-space:nowrap;position:absolute;left:719px">4</div>
<div style="top:196px;line-height:65px;white-space:nowrap;position:absolute;left:894px">2100214</div>
<div style="top:196px;line-height:65px;white-space:nowrap;position:absolute;left:1044px">88803358</div>
<div style="top:196px;line-height:65px;white-space:nowrap;position:absolute;left:1122px;width:200px;text-align:right">0.00~11.00</div>
<div style="top:196px;line-height:65px;white-space:nowrap;position:absolute;left:1272px;width:200px;text-align:right">0.00</div>
<div style="top:196px;line-height:65px;white-space:nowrap;position:absolute;left:1422px;width:200px;text-align:right">-</div>
<div style="top:196px;line-height:65px;white-space:nowrap;position:absolute;left:1719px;color:#2468f2"><span class="c">推广</span></div>
<svg class="abs" style="left:1756px;top:224px" width="15" height="10" viewBox="0 0 15 10"><path d="M1.5 2L7.5 8L13.5 2" fill="none" stroke="#2468f2" stroke-width="1.8"/></svg>
<div style="top:196px;line-height:65px;white-space:nowrap;position:absolute;left:1792px;color:#2468f2"><span class="c">更多</span></div>
<svg class="abs" style="left:1829px;top:224px" width="15" height="10" viewBox="0 0 15 10"><path d="M1.5 2L7.5 8L13.5 2" fill="none" stroke="#2468f2" stroke-width="1.8"/></svg>
<div class="abs" style="left:0;top:260px;width:1908px;height:65px;background:#fff;border-bottom:1px solid #e8e8e8"></div>
<div class="abs" style="left:10px;top:282px;width:20px;height:20px;border:2px solid #c8c8c8;border-radius:2px;background:#fff"></div>
<svg class="abs" style="left:54px;top:286px" width="10" height="14" viewBox="0 0 10 14"><path d="M1.5 1L7.5 7L1.5 13" fill="none" stroke="#111" stroke-width="1.8"/></svg>
<div style="top:261px;line-height:65px;white-space:nowrap;position:absolute;left:108px;color:#2468f2">24627</div>
<div class="abs" style="left:243px;top:265px;width:53px;height:53px;border:1px solid #dadada;border-radius:6px;background:#fff;overflow:hidden"><svg class="abs" style="left:11px;top:14px" width="30" height="24" viewBox="0 0 30 24"><rect width="30" height="24" fill="#eeeeee"/><path d="M0 20L10 9L19 18L23 14L30 21V24H0Z" fill="#dddddd"/><path d="M18 18L23 13L29 20L27 22Z" fill="#d2d2d2"/><circle cx="24" cy="6" r="2.5" fill="#dcdcdc"/></svg></div>
<div style="top:261px;line-height:65px;white-space:nowrap;position:absolute;left:306px;width:176px;overflow:hidden"><span class="c">黄花菜</span></div>
<div style="top:261px;line-height:65px;white-space:nowrap;position:absolute;left:494px;width:200px;overflow:hidden"><span class="c">电脑显卡</span></div>
<div style="top:261px;line-height:65px;white-space:nowrap;position:absolute;left:719px">1</div>
<div style="top:261px;line-height:65px;white-space:nowrap;position:absolute;left:894px">2100213</div>
<div style="top:261px;line-height:65px;white-space:nowrap;position:absolute;left:1044px">88803357</div>
<div style="top:261px;line-height:65px;white-space:nowrap;position:absolute;left:1122px;width:200px;text-align:right">0.00</div>
<div style="top:261px;line-height:65px;white-space:nowrap;position:absolute;left:1272px;width:200px;text-align:right">0.00</div>
<div style="top:261px;line-height:65px;white-space:nowrap;position:absolute;left:1422px;width:200px;text-align:right">-</div>
<div style="top:261px;line-height:65px;white-space:nowrap;position:absolute;left:1719px;color:#2468f2"><span class="c">推广</span></div>
<svg class="abs" style="left:1756px;top:289px" width="15" height="10" viewBox="0 0 15 10"><path d="M1.5 2L7.5 8L13.5 2" fill="none" stroke="#2468f2" stroke-width="1.8"/></svg>
<div style="top:261px;line-height:65px;white-space:nowrap;position:absolute;left:1792px;color:#2468f2"><span class="c">更多</span></div>
<svg class="abs" style="left:1829px;top:289px" width="15" height="10" viewBox="0 0 15 10"><path d="M1.5 2L7.5 8L13.5 2" fill="none" stroke="#2468f2" stroke-width="1.8"/></svg>
<div class="abs" style="left:0;top:325px;width:1908px;height:65px;background:#fafbfb;border-bottom:1px solid #e8e8e8"></div>
<div class="abs" style="left:10px;top:347px;width:20px;height:20px;border:2px solid #c8c8c8;border-radius:2px;background:#fff"></div>
<svg class="abs" style="left:54px;top:351px" width="10" height="14" viewBox="0 0 10 14"><path d="M1.5 1L7.5 7L1.5 13" fill="none" stroke="#111" stroke-width="1.8"/></svg>
<div style="top:326px;line-height:65px;white-space:nowrap;position:absolute;left:108px;color:#2468f2">24626</div>
<div class="abs" style="left:243px;top:330px;width:53px;height:53px;border:1px solid #dadada;border-radius:6px;background:#fff;overflow:hidden"><svg class="abs" style="left:11px;top:14px" width="30" height="24" viewBox="0 0 30 24"><rect width="30" height="24" fill="#eeeeee"/><path d="M0 20L10 9L19 18L23 14L30 21V24H0Z" fill="#dddddd"/><path d="M18 18L23 13L29 20L27 22Z" fill="#d2d2d2"/><circle cx="24" cy="6" r="2.5" fill="#dcdcdc"/></svg></div>
<div style="top:326px;line-height:65px;white-space:nowrap;position:absolute;left:306px;width:176px;overflow:hidden"><span class="c">酱油生抽</span></div>
<div style="top:326px;line-height:65px;white-space:nowrap;position:absolute;left:494px;width:200px;overflow:hidden"><span class="c">电脑显卡</span></div>
<div style="top:326px;line-height:65px;white-space:nowrap;position:absolute;left:719px">1</div>
<div style="top:326px;line-height:65px;white-space:nowrap;position:absolute;left:894px">2100212</div>
<div style="top:326px;line-height:65px;white-space:nowrap;position:absolute;left:1044px">88803356</div>
<div style="top:326px;line-height:65px;white-space:nowrap;position:absolute;left:1122px;width:200px;text-align:right">0.00</div>
<div style="top:326px;line-height:65px;white-space:nowrap;position:absolute;left:1272px;width:200px;text-align:right">0.00</div>
<div style="top:326px;line-height:65px;white-space:nowrap;position:absolute;left:1422px;width:200px;text-align:right">-</div>
<div style="top:326px;line-height:65px;white-space:nowrap;position:absolute;left:1719px;color:#2468f2"><span class="c">推广</span></div>
<svg class="abs" style="left:1756px;top:354px" width="15" height="10" viewBox="0 0 15 10"><path d="M1.5 2L7.5 8L13.5 2" fill="none" stroke="#2468f2" stroke-width="1.8"/></svg>
<div style="top:326px;line-height:65px;white-space:nowrap;position:absolute;left:1792px;color:#2468f2"><span class="c">更多</span></div>
<svg class="abs" style="left:1829px;top:354px" width="15" height="10" viewBox="0 0 15 10"><path d="M1.5 2L7.5 8L13.5 2" fill="none" stroke="#2468f2" stroke-width="1.8"/></svg>
<div class="abs" style="left:0;top:390px;width:1908px;height:65px;background:#fff;border-bottom:1px solid #e8e8e8"></div>
<div class="abs" style="left:10px;top:412px;width:20px;height:20px;border:2px solid #c8c8c8;border-radius:2px;background:#fff"></div>
<svg class="abs" style="left:54px;top:416px" width="10" height="14" viewBox="0 0 10 14"><path d="M1.5 1L7.5 7L1.5 13" fill="none" stroke="#111" stroke-width="1.8"/></svg>
<div style="top:391px;line-height:65px;white-space:nowrap;position:absolute;left:108px;color:#2468f2">24625</div>
<div class="abs" style="left:243px;top:395px;width:53px;height:53px;border:1px solid #dadada;border-radius:6px;background:#fff;overflow:hidden"><svg class="abs" style="left:11px;top:14px" width="30" height="24" viewBox="0 0 30 24"><rect width="30" height="24" fill="#eeeeee"/><path d="M0 20L10 9L19 18L23 14L30 21V24H0Z" fill="#dddddd"/><path d="M18 18L23 13L29 20L27 22Z" fill="#d2d2d2"/><circle cx="24" cy="6" r="2.5" fill="#dcdcdc"/></svg></div>
<div style="top:391px;line-height:65px;white-space:nowrap;position:absolute;left:306px;width:176px;overflow:hidden"><span class="c">烧鹅</span></div>
<div style="top:391px;line-height:65px;white-space:nowrap;position:absolute;left:494px;width:200px;overflow:hidden"><span class="c">电脑显卡</span></div>
<div style="top:391px;line-height:65px;white-space:nowrap;position:absolute;left:719px">1</div>
<div style="top:391px;line-height:65px;white-space:nowrap;position:absolute;left:894px">2100211</div>
<div style="top:391px;line-height:65px;white-space:nowrap;position:absolute;left:1044px">88803355</div>
<div style="top:391px;line-height:65px;white-space:nowrap;position:absolute;left:1122px;width:200px;text-align:right">0.00</div>
<div style="top:391px;line-height:65px;white-space:nowrap;position:absolute;left:1272px;width:200px;text-align:right">0.00</div>
<div style="top:391px;line-height:65px;white-space:nowrap;position:absolute;left:1422px;width:200px;text-align:right">-</div>
<div style="top:391px;line-height:65px;white-space:nowrap;position:absolute;left:1719px;color:#2468f2"><span class="c">推广</span></div>
<svg class="abs" style="left:1756px;top:419px" width="15" height="10" viewBox="0 0 15 10"><path d="M1.5 2L7.5 8L13.5 2" fill="none" stroke="#2468f2" stroke-width="1.8"/></svg>
<div style="top:391px;line-height:65px;white-space:nowrap;position:absolute;left:1792px;color:#2468f2"><span class="c">更多</span></div>
<svg class="abs" style="left:1829px;top:419px" width="15" height="10" viewBox="0 0 15 10"><path d="M1.5 2L7.5 8L13.5 2" fill="none" stroke="#2468f2" stroke-width="1.8"/></svg>
<div class="abs" style="left:0;top:455px;width:1908px;height:65px;background:#fafbfb;border-bottom:1px solid #e8e8e8"></div>
<div class="abs" style="left:10px;top:477px;width:20px;height:20px;border:2px solid #c8c8c8;border-radius:2px;background:#fff"></div>
<svg class="abs" style="left:54px;top:481px" width="10" height="14" viewBox="0 0 10 14"><path d="M1.5 1L7.5 7L1.5 13" fill="none" stroke="#111" stroke-width="1.8"/></svg>
<div style="top:456px;line-height:65px;white-space:nowrap;position:absolute;left:108px;color:#2468f2">24615</div>
<div class="abs" style="left:243px;top:460px;width:53px;height:53px;border:1px solid #dadada;border-radius:6px;background:#fff;overflow:hidden"><svg class="abs" style="left:11px;top:14px" width="30" height="24" viewBox="0 0 30 24"><rect width="30" height="24" fill="#eeeeee"/><path d="M0 20L10 9L19 18L23 14L30 21V24H0Z" fill="#dddddd"/><path d="M18 18L23 13L29 20L27 22Z" fill="#d2d2d2"/><circle cx="24" cy="6" r="2.5" fill="#dcdcdc"/></svg></div>
<div style="top:456px;line-height:65px;white-space:nowrap;position:absolute;left:306px;width:176px;overflow:hidden"><span class="c">皮皮虾籽</span></div>
<div style="top:456px;line-height:65px;white-space:nowrap;position:absolute;left:494px;width:200px;overflow:hidden"><span class="c">电脑显卡</span></div>
<div style="top:456px;line-height:65px;white-space:nowrap;position:absolute;left:719px">0</div>
<div style="top:456px;line-height:65px;white-space:nowrap;position:absolute;left:894px">2100199</div>
<div style="top:456px;line-height:65px;white-space:nowrap;position:absolute;left:1044px">88803347</div>
<div style="top:456px;line-height:65px;white-space:nowrap;position:absolute;left:1122px;width:200px;text-align:right">99.00</div>
<div style="top:456px;line-height:65px;white-space:nowrap;position:absolute;left:1272px;width:200px;text-align:right">0.00</div>
<div style="top:456px;line-height:65px;white-space:nowrap;position:absolute;left:1422px;width:200px;text-align:right">-</div>
<div style="top:456px;line-height:65px;white-space:nowrap;position:absolute;left:1719px;color:#2468f2"><span class="c">推广</span></div>
<svg class="abs" style="left:1756px;top:484px" width="15" height="10" viewBox="0 0 15 10"><path d="M1.5 2L7.5 8L13.5 2" fill="none" stroke="#2468f2" stroke-width="1.8"/></svg>
<div style="top:456px;line-height:65px;white-space:nowrap;position:absolute;left:1792px;color:#2468f2"><span class="c">更多</span></div>
<svg class="abs" style="left:1829px;top:484px" width="15" height="10" viewBox="0 0 15 10"><path d="M1.5 2L7.5 8L13.5 2" fill="none" stroke="#2468f2" stroke-width="1.8"/></svg>
<div class="abs" style="left:0;top:520px;width:1908px;height:65px;background:#fff;border-bottom:1px solid #e8e8e8"></div>
<div class="abs" style="left:10px;top:542px;width:20px;height:20px;border:2px solid #c8c8c8;border-radius:2px;background:#fff"></div>
<svg class="abs" style="left:54px;top:546px" width="10" height="14" viewBox="0 0 10 14"><path d="M1.5 1L7.5 7L1.5 13" fill="none" stroke="#111" stroke-width="1.8"/></svg>
<div style="top:521px;line-height:65px;white-space:nowrap;position:absolute;left:108px;color:#2468f2">24543</div>
<div class="abs" style="left:243px;top:525px;width:53px;height:53px;border:1px solid #dadada;border-radius:6px;background:#fff;overflow:hidden"><svg class="abs" style="left:11px;top:14px" width="30" height="24" viewBox="0 0 30 24"><rect width="30" height="24" fill="#eeeeee"/><path d="M0 20L10 9L19 18L23 14L30 21V24H0Z" fill="#dddddd"/><path d="M18 18L23 13L29 20L27 22Z" fill="#d2d2d2"/><circle cx="24" cy="6" r="2.5" fill="#dcdcdc"/></svg></div>
<div style="top:521px;line-height:65px;white-space:nowrap;position:absolute;left:306px;width:176px;overflow:hidden"><span class="c">测试</span>996</div>
<div style="top:521px;line-height:65px;white-space:nowrap;position:absolute;left:494px;width:200px;overflow:hidden"><span class="c">电脑显卡</span></div>
<div style="top:521px;line-height:65px;white-space:nowrap;position:absolute;left:719px">1</div>
<div style="top:521px;line-height:65px;white-space:nowrap;position:absolute;left:894px">2100117</div>
<div style="top:521px;line-height:65px;white-space:nowrap;position:absolute;left:1044px">88803309</div>
<div style="top:521px;line-height:65px;white-space:nowrap;position:absolute;left:1122px;width:200px;text-align:right">0.00</div>
<div style="top:521px;line-height:65px;white-space:nowrap;position:absolute;left:1272px;width:200px;text-align:right">0.00</div>
<div style="top:521px;line-height:65px;white-space:nowrap;position:absolute;left:1422px;width:200px;text-align:right">-</div>
<div style="top:521px;line-height:65px;white-space:nowrap;position:absolute;left:1719px;color:#2468f2"><span class="c">推广</span></div>
<svg class="abs" style="left:1756px;top:549px" width="15" height="10" viewBox="0 0 15 10"><path d="M1.5 2L7.5 8L13.5 2" fill="none" stroke="#2468f2" stroke-width="1.8"/></svg>
<div style="top:521px;line-height:65px;white-space:nowrap;position:absolute;left:1792px;color:#2468f2"><span class="c">更多</span></div>
<svg class="abs" style="left:1829px;top:549px" width="15" height="10" viewBox="0 0 15 10"><path d="M1.5 2L7.5 8L13.5 2" fill="none" stroke="#2468f2" stroke-width="1.8"/></svg>
<div class="abs" style="left:0;top:585px;width:1908px;height:65px;background:#fafbfb;border-bottom:1px solid #e8e8e8"></div>
<div class="abs" style="left:10px;top:607px;width:20px;height:20px;border:2px solid #c8c8c8;border-radius:2px;background:#fff"></div>
<svg class="abs" style="left:54px;top:611px" width="10" height="14" viewBox="0 0 10 14"><path d="M1.5 1L7.5 7L1.5 13" fill="none" stroke="#111" stroke-width="1.8"/></svg>
<div style="top:586px;line-height:65px;white-space:nowrap;position:absolute;left:108px;color:#2468f2">24515</div>
<div class="abs" style="left:243px;top:590px;width:53px;height:53px;border:1px solid #dadada;border-radius:6px;background:#fff;overflow:hidden"><svg class="abs" style="left:11px;top:14px" width="30" height="24" viewBox="0 0 30 24"><rect width="30" height="24" fill="#eeeeee"/><path d="M0 20L10 9L19 18L23 14L30 21V24H0Z" fill="#dddddd"/><path d="M18 18L23 13L29 20L27 22Z" fill="#d2d2d2"/><circle cx="24" cy="6" r="2.5" fill="#dcdcdc"/></svg></div>
<div style="top:586px;line-height:65px;white-space:nowrap;position:absolute;left:306px;width:176px;overflow:hidden">XYK-<span class="c">果切</span></div>
<div style="top:586px;line-height:65px;white-space:nowrap;position:absolute;left:494px;width:200px;overflow:hidden"><span class="c">电脑显卡</span></div>
<div style="top:586px;line-height:65px;white-space:nowrap;position:absolute;left:719px">1</div>
<div style="top:586px;line-height:65px;white-space:nowrap;position:absolute;left:894px">2100094</div>
<div style="top:586px;line-height:65px;white-space:nowrap;position:absolute;left:1044px">88803285</div>
<div style="top:586px;line-height:65px;white-space:nowrap;position:absolute;left:1122px;width:200px;text-align:right">0.00</div>
<div style="top:586px;line-height:65px;white-space:nowrap;position:absolute;left:1272px;width:200px;text-align:right">0.00</div>
<div style="top:586px;line-height:65px;white-space:nowrap;position:absolute;left:1422px;width:200px;text-align:right">-</div>
<div style="top:586px;line-height:65px;white-space:nowrap;position:absolute;left:1719px;color:#2468f2"><span class="c">推广</span></div>
<svg class="abs" style="left:1756px;top:614px" width="15" height="10" viewBox="0 0 15 10"><path d="M1.5 2L7.5 8L13.5 2" fill="none" stroke="#2468f2" stroke-width="1.8"/></svg>
<div style="top:586px;line-height:65px;white-space:nowrap;position:absolute;left:1792px;color:#2468f2"><span class="c">更多</span></div>
<svg class="abs" style="left:1829px;top:614px" width="15" height="10" viewBox="0 0 15 10"><path d="M1.5 2L7.5 8L13.5 2" fill="none" stroke="#2468f2" stroke-width="1.8"/></svg>
<div class="abs" style="left:0;top:650px;width:1908px;height:65px;background:#fff;border-bottom:1px solid #e8e8e8"></div>
<div class="abs" style="left:10px;top:672px;width:20px;height:20px;border:2px solid #c8c8c8;border-radius:2px;background:#fff"></div>
<svg class="abs" style="left:54px;top:676px" width="10" height="14" viewBox="0 0 10 14"><path d="M1.5 1L7.5 7L1.5 13" fill="none" stroke="#111" stroke-width="1.8"/></svg>
<div style="top:651px;line-height:65px;white-space:nowrap;position:absolute;left:108px;color:#2468f2">24514</div>
<div class="abs" style="left:243px;top:655px;width:53px;height:53px;border:1px solid #dadada;border-radius:6px;background:#fff;overflow:hidden"><svg class="abs" style="left:11px;top:14px" width="30" height="24" viewBox="0 0 30 24"><rect width="30" height="24" fill="#eeeeee"/><path d="M0 20L10 9L19 18L23 14L30 21V24H0Z" fill="#dddddd"/><path d="M18 18L23 13L29 20L27 22Z" fill="#d2d2d2"/><circle cx="24" cy="6" r="2.5" fill="#dcdcdc"/></svg></div>
<div style="top:651px;line-height:65px;white-space:nowrap;position:absolute;left:306px;width:176px;overflow:hidden"><span class="c">果切礼盒</span>-xyk</div>
<div style="top:651px;line-height:65px;white-space:nowrap;position:absolute;left:494px;width:200px;overflow:hidden"><span class="c">电脑显卡</span></div>
<div style="top:651px;line-height:65px;white-space:nowrap;position:absolute;left:719px">0</div>
<div style="top:651px;line-height:65px;white-space:nowrap;position:absolute;left:894px">2100093</div>
<div style="top:651px;line-height:65px;white-space:nowrap;position:absolute;left:1044px">88803284</div>
<div style="top:651px;line-height:65px;white-space:nowrap;position:absolute;left:1122px;width:200px;text-align:right">20.00</div>
<div style="top:651px;line-height:65px;white-space:nowrap;position:absolute;left:1272px;width:200px;text-align:right">0.00</div>
<div style="top:651px;line-height:65px;white-space:nowrap;position:absolute;left:1422px;width:200px;text-align:right">-</div>
<div style="top:651px;line-height:65px;white-space:nowrap;position:absolute;left:1719px;color:#2468f2"><span class="c">推广</span></div>
<svg class="abs" style="left:1756px;top:679px" width="15" height="10" viewBox="0 0 15 10"><path d="M1.5 2L7.5 8L13.5 2" fill="none" stroke="#2468f2" stroke-width="1.8"/></svg>
<div style="top:651px;line-height:65px;white-space:nowrap;position:absolute;left:1792px;color:#2468f2"><span class="c">更多</span></div>
<svg class="abs" style="left:1829px;top:679px" width="15" height="10" viewBox="0 0 15 10"><path d="M1.5 2L7.5 8L13.5 2" fill="none" stroke="#2468f2" stroke-width="1.8"/></svg>
<div class="abs" style="left:0;top:715px;width:1908px;height:65px;background:#fafbfb;border-bottom:1px solid #e8e8e8"></div>
<div class="abs" style="left:10px;top:737px;width:20px;height:20px;border:2px solid #c8c8c8;border-radius:2px;background:#fff"></div>
<svg class="abs" style="left:54px;top:741px" width="10" height="14" viewBox="0 0 10 14"><path d="M1.5 1L7.5 7L1.5 13" fill="none" stroke="#111" stroke-width="1.8"/></svg>
<div style="top:716px;line-height:65px;white-space:nowrap;position:absolute;left:108px;color:#2468f2">24532</div>
<div class="abs" style="left:243px;top:720px;width:53px;height:53px;border:1px solid #dadada;border-radius:6px;background:#fff;overflow:hidden"><svg class="abs" style="left:11px;top:14px" width="30" height="24" viewBox="0 0 30 24"><rect width="30" height="24" fill="#eeeeee"/><path d="M0 20L10 9L19 18L23 14L30 21V24H0Z" fill="#dddddd"/><path d="M18 18L23 13L29 20L27 22Z" fill="#d2d2d2"/><circle cx="24" cy="6" r="2.5" fill="#dcdcdc"/></svg></div>
<div style="top:716px;line-height:65px;white-space:nowrap;position:absolute;left:306px;width:176px;overflow:hidden"><span class="c">香飘飘三连杯</span></div>
<div style="top:716px;line-height:65px;white-space:nowrap;position:absolute;left:494px;width:200px;overflow:hidden"><span class="c">电脑显卡</span></div>
<div style="top:716px;line-height:65px;white-space:nowrap;position:absolute;left:719px">2</div>
<div style="top:716px;line-height:65px;white-space:nowrap;position:absolute;left:894px">2100105</div>
<div style="top:716px;line-height:65px;white-space:nowrap;position:absolute;left:1044px">88803297</div>
<div style="top:716px;line-height:65px;white-space:nowrap;position:absolute;left:1122px;width:200px;text-align:right">12.00~36.00</div>
<div style="top:716px;line-height:65px;white-space:nowrap;position:absolute;left:1272px;width:200px;text-align:right">0.00</div>
<div style="top:716px;line-height:65px;white-space:nowrap;position:absolute;left:1422px;width:200px;text-align:right">-</div>
<div style="top:716px;line-height:65px;white-space:nowrap;position:absolute;left:1719px;color:#2468f2"><span class="c">推广</span></div>
<svg class="abs" style="left:1756px;top:744px" width="15" height="10" viewBox="0 0 15 10"><path d="M1.5 2L7.5 8L13.5 2" fill="none" stroke="#2468f2" stroke-width="1.8"/></svg>
<div style="top:716px;line-height:65px;white-space:nowrap;position:absolute;left:1792px;color:#2468f2"><span class="c">更多</span></div>
<svg class="abs" style="left:1829px;top:744px" width="15" height="10" viewBox="0 0 15 10"><path d="M1.5 2L7.5 8L13.5 2" fill="none" stroke="#2468f2" stroke-width="1.8"/></svg>
<div class="abs" style="left:0;top:780px;width:1908px;height:65px;background:#fff;border-bottom:1px solid #e8e8e8"></div>
<div class="abs" style="left:10px;top:802px;width:20px;height:20px;border:2px solid #c8c8c8;border-radius:2px;background:#fff"></div>
<svg class="abs" style="left:54px;top:806px" width="10" height="14" viewBox="0 0 10 14"><path d="M1.5 1L7.5 7L1.5 13" fill="none" stroke="#111" stroke-width="1.8"/></svg>
<div style="top:781px;line-height:65px;white-space:nowrap;position:absolute;left:108px;color:#2468f2">24639</div>
<div class="abs" style="left:243px;top:785px;width:53px;height:53px;border:1px solid #dadada;border-radius:6px;background:#fff;overflow:hidden"><svg class="abs" style="left:11px;top:14px" width="30" height="24" viewBox="0 0 30 24"><rect width="30" height="24" fill="#eeeeee"/><path d="M0 20L10 9L19 18L23 14L30 21V24H0Z" fill="#dddddd"/><path d="M18 18L23 13L29 20L27 22Z" fill="#d2d2d2"/><circle cx="24" cy="6" r="2.5" fill="#dcdcdc"/></svg></div>
<div style="top:781px;line-height:65px;white-space:nowrap;position:absolute;left:306px;width:176px;overflow:hidden"><span class="c">积分兑换商品</span>1</div>
<div style="top:781px;line-height:65px;white-space:nowrap;position:absolute;left:494px;width:200px;overflow:hidden"><span class="c">蔡测试</span></div>
<div style="top:781px;line-height:65px;white-space:nowrap;position:absolute;left:719px">11</div>
<div style="top:781px;line-height:65px;white-space:nowrap;position:absolute;left:894px">2100227</div>
<div style="top:781px;line-height:65px;white-space:nowrap;position:absolute;left:1044px">88803361</div>
<div style="top:781px;line-height:65px;white-space:nowrap;position:absolute;left:1122px;width:200px;text-align:right">6.00</div>
<div style="top:781px;line-height:65px;white-space:nowrap;position:absolute;left:1272px;width:200px;text-align:right">7.00</div>
<div style="top:781px;line-height:65px;white-space:nowrap;position:absolute;left:1422px;width:200px;text-align:right">-</div>
<div style="top:781px;line-height:65px;white-space:nowrap;position:absolute;left:1719px;color:#2468f2"><span class="c">推广</span></div>
<svg class="abs" style="left:1756px;top:809px" width="15" height="10" viewBox="0 0 15 10"><path d="M1.5 2L7.5 8L13.5 2" fill="none" stroke="#2468f2" stroke-width="1.8"/></svg>
<div style="top:781px;line-height:65px;white-space:nowrap;position:absolute;left:1792px;color:#2468f2"><span class="c">更多</span></div>
<svg class="abs" style="left:1829px;top:809px" width="15" height="10" viewBox="0 0 15 10"><path d="M1.5 2L7.5 8L13.5 2" fill="none" stroke="#2468f2" stroke-width="1.8"/></svg>
<div class="abs" style="left:0;top:845px;width:1908px;height:65px;background:#fafbfb;border-bottom:1px solid #e8e8e8"></div>
<div class="abs" style="left:10px;top:867px;width:20px;height:20px;border:2px solid #c8c8c8;border-radius:2px;background:#fff"></div>
<svg class="abs" style="left:54px;top:871px" width="10" height="14" viewBox="0 0 10 14"><path d="M1.5 1L7.5 7L1.5 13" fill="none" stroke="#111" stroke-width="1.8"/></svg>
<div style="top:846px;line-height:65px;white-space:nowrap;position:absolute;left:108px;color:#2468f2"></div>
<div class="abs" style="left:243px;top:850px;width:53px;height:53px;border:1px solid #dadada;border-radius:6px;background:#fff;overflow:hidden"><svg class="abs" style="left:11px;top:14px" width="30" height="24" viewBox="0 0 30 24"><rect width="30" height="24" fill="#eeeeee"/><path d="M0 20L10 9L19 18L23 14L30 21V24H0Z" fill="#dddddd"/><path d="M18 18L23 13L29 20L27 22Z" fill="#d2d2d2"/><circle cx="24" cy="6" r="2.5" fill="#dcdcdc"/></svg></div>
<div style="top:846px;line-height:65px;white-space:nowrap;position:absolute;left:306px;width:176px;overflow:hidden"></div>
<div style="top:846px;line-height:65px;white-space:nowrap;position:absolute;left:494px;width:200px;overflow:hidden"></div>
<div style="top:846px;line-height:65px;white-space:nowrap;position:absolute;left:719px"></div>
<div style="top:846px;line-height:65px;white-space:nowrap;position:absolute;left:894px"></div>
<div style="top:846px;line-height:65px;white-space:nowrap;position:absolute;left:1044px"></div>
<div class="abs" style="left:82px;top:0;width:1px;height:900px;background:#e8e8e8"></div>
<div class="abs" style="left:1709px;top:0;width:1px;height:900px;background:#e8e8e8"></div>
</div>
<div class="abs" style="left:593px;top:266px;width:20px;height:20px;border:2px solid #c8c8c8;border-radius:2px;background:#fff"></div>
<div class="abs" style="left:622px;top:269px;width:2px;height:15px;background:#b5b9c4"></div>
<div class="abs" style="left:665px;top:255px;width:1px;height:43px;background:#cfd1d8"></div>
<div class="abs" style="left:2291px;top:255px;width:1px;height:43px;background:#cfd1d8"></div>
<div style="top:255px;line-height:42px;font-weight:bold;white-space:nowrap;position:absolute;left:677px"><span class="c">商品编码</span></div>
<svg class="abs" style="left:749px;top:268px" width="11" height="16" viewBox="0 0 11 16"><path d="M1.5 5.8L5.5 1.8L9.5 5.8M1.5 10.2L5.5 14.2L9.5 10.2" fill="none" stroke="#8c8c8c" stroke-width="1.5"/></svg>
<div class="abs" style="left:815px;top:269px;width:1px;height:15px;background:#c6c9d0"></div>
<div style="top:255px;line-height:42px;font-weight:bold;white-space:nowrap;position:absolute;left:827px"><span class="c">商品名称</span></div>
<svg class="abs" style="left:899px;top:268px" width="11" height="16" viewBox="0 0 11 16"><path d="M1.5 5.8L5.5 1.8L9.5 5.8M1.5 10.2L5.5 14.2L9.5 10.2" fill="none" stroke="#8c8c8c" stroke-width="1.5"/></svg>
<div class="abs" style="left:1065px;top:269px;width:1px;height:15px;background:#c6c9d0"></div>
<div style="top:255px;line-height:42px;font-weight:bold;white-space:nowrap;position:absolute;left:1077px"><span class="c">商品分组</span></div>
<div class="abs" style="left:1290px;top:269px;width:1px;height:15px;background:#c6c9d0"></div>
<div style="top:255px;line-height:42px;font-weight:bold;white-space:nowrap;position:absolute;left:1302px"><span class="c">商品销量</span></div>
<div class="abs" style="left:1374px;top:268px;width:15px;height:15px;border-radius:50%;background:#c0c4cc;color:#fff;font-size:11px;line-height:15px;text-align:center;font-weight:bold">?</div>
<svg class="abs" style="left:1440px;top:270px" width="13" height="12" viewBox="0 0 13 12"><path d="M0 1.5H13M0 5.4H13M0 9.1H13" stroke="#111" stroke-width="1.4"/></svg>
<div class="abs" style="left:1465px;top:269px;width:1px;height:15px;background:#c6c9d0"></div>
<div style="top:255px;line-height:42px;font-weight:bold;white-space:nowrap;position:absolute;left:1477px"><span class="c">商品条码</span></div>
<svg class="abs" style="left:1549px;top:268px" width="11" height="16" viewBox="0 0 11 16"><path d="M1.5 5.8L5.5 1.8L9.5 5.8M1.5 10.2L5.5 14.2L9.5 10.2" fill="none" stroke="#8c8c8c" stroke-width="1.5"/></svg>
<div class="abs" style="left:1615px;top:269px;width:1px;height:15px;background:#c6c9d0"></div>
<div style="top:255px;line-height:42px;font-weight:bold;white-space:nowrap;position:absolute;left:1627px"><span class="c">商品代码</span></div>
<svg class="abs" style="left:1699px;top:268px" width="11" height="16" viewBox="0 0 11 16"><path d="M1.5 5.8L5.5 1.8L9.5 5.8M1.5 10.2L5.5 14.2L9.5 10.2" fill="none" stroke="#8c8c8c" stroke-width="1.5"/></svg>
<div class="abs" style="left:1765px;top:269px;width:1px;height:15px;background:#c6c9d0"></div>
<div style="top:255px;line-height:42px;font-weight:bold;white-space:nowrap;position:absolute;left:1705px;width:200px;text-align:right"><span class="c">标准售价</span>(<span class="c">元</span>)</div>
<div class="abs" style="left:1915px;top:269px;width:1px;height:15px;background:#c6c9d0"></div>
<div style="top:255px;line-height:42px;font-weight:bold;white-space:nowrap;position:absolute;left:1855px;width:200px;text-align:right"><span class="c">划线价</span>(<span class="c">元</span>)</div>
<div class="abs" style="left:2065px;top:269px;width:1px;height:15px;background:#c6c9d0"></div>
<div style="top:255px;line-height:42px;font-weight:bold;white-space:nowrap;position:absolute;left:2005px;width:200px;text-align:right"><span class="c">二级售价</span>(<span class="c">元</span>)</div>
<div class="abs" style="left:2215px;top:269px;width:1px;height:15px;background:#c6c9d0"></div>
<div style="top:255px;line-height:42px;font-weight:bold;white-space:nowrap;position:absolute;left:2257px;width:34px;overflow:hidden"><span class="c">三级售价</span></div>
<div style="top:255px;line-height:42px;font-weight:bold;white-space:nowrap;position:absolute;left:2302px"><span class="c">操作</span></div>
<div class="abs" style="left:2504px;top:255px;width:26px;height:923px;background:#fafbfc;border-left:1px solid #eceef2"></div>
<div class="abs" style="left:2505px;top:329px;width:24px;height:1px;background:#e6e8ec"></div>
<svg class="abs" style="left:2511px;top:275px" width="13" height="11" viewBox="0 0 13 11"><rect x="0.8" y="0.8" width="11.4" height="9.4" fill="none" stroke="#111" stroke-width="1.4"/><path d="M4.7 1V10M8.3 1V10" stroke="#111" stroke-width="1.2"/></svg>
<div class="abs" style="left:2509px;top:294px;line-height:22px"><span class="c">列</span></div>
<svg class="abs" style="left:2493px;top:303px" width="9" height="6" viewBox="0 0 9 6"><path d="M0 6L4.5 0L9 6Z" fill="#8a8a8a"/></svg>
<div class="abs" style="left:2494px;top:314px;width:7px;height:222px;border-radius:4px;background:#8a8a8a"></div>
<svg class="abs" style="left:2493px;top:1155px" width="9" height="6" viewBox="0 0 9 6"><path d="M0 0L4.5 6L9 0Z" fill="#8a8a8a"/></svg>
<div class="abs" style="left:583px;top:1165px;width:1921px;height:12px;background:#fafbfb"></div>
<svg class="abs" style="left:587px;top:1167px" width="6" height="10" viewBox="0 0 6 10"><path d="M6 0L0 5L6 10Z" fill="#8a8a8a"/></svg>
<svg class="abs" style="left:655px;top:1167px" width="6" height="10" viewBox="0 0 6 10"><path d="M0 0L6 5L0 10Z" fill="#8a8a8a"/></svg>
<svg class="abs" style="left:670px;top:1167px" width="6" height="10" viewBox="0 0 6 10"><path d="M6 0L0 5L6 10Z" fill="#8a8a8a"/></svg>
<svg class="abs" style="left:2283px;top:1167px" width="6" height="10" viewBox="0 0 6 10"><path d="M0 0L6 5L0 10Z" fill="#8a8a8a"/></svg>
<svg class="abs" style="left:2296px;top:1167px" width="6" height="10" viewBox="0 0 6 10"><path d="M6 0L0 5L6 10Z" fill="#8a8a8a"/></svg>
<svg class="abs" style="left:2494px;top:1167px" width="6" height="10" viewBox="0 0 6 10"><path d="M0 0L6 5L0 10Z" fill="#8a8a8a"/></svg>
<div class="abs" style="left:681px;top:1168px;width:697px;height:8px;border-radius:4px;background:#8a8a8a"></div>
<div class="abs" style="left:665px;top:1162px;width:1px;height:15px;background:#e8e8e8"></div>
<div class="abs" style="left:2291px;top:1162px;width:1px;height:15px;background:#e8e8e8"></div>
<div class="abs" style="left:1917px;top:1194px;line-height:32px"><span class="c">共</span>2750<span class="c">条</span></div>
<svg class="abs" style="left:2011px;top:1202px" width="9" height="14" viewBox="0 0 9 14"><path d="M7.5 1L1.5 7L7.5 13" fill="none" stroke="#bbb" stroke-width="1.5"/></svg>
<div class="abs" style="left:2031px;top:1194px;width:30px;height:30px;border-radius:4px;background:#2468f2;color:#fff;text-align:center;line-height:31px;font-weight:bold;font-size:15px">1</div>
<div class="abs" style="left:2056px;width:40px;text-align:center;top:1194px;line-height:31px;font-size:15px">2</div>
<div class="abs" style="left:2086px;width:40px;text-align:center;top:1194px;line-height:31px;font-size:15px">3</div>
<div class="abs" style="left:2116px;width:40px;text-align:center;top:1194px;line-height:31px;font-size:15px">4</div>
<div class="abs" style="left:2146px;width:40px;text-align:center;top:1194px;line-height:31px;font-size:15px">5</div>
<div class="abs" style="left:2217px;width:40px;text-align:center;top:1194px;line-height:31px;font-size:15px">55</div>
<div class="abs" style="left:2189px;top:1207px;width:23px;height:5px;background:radial-gradient(circle,#c6c6c6 2px,transparent 2.5px) 0 0/8px 5px repeat-x"></div>
<svg class="abs" style="left:2265px;top:1202px" width="9" height="14" viewBox="0 0 9 14"><path d="M1.5 1L7.5 7L1.5 13" fill="none" stroke="#111" stroke-width="1.7"/></svg>
<div class="inp" style="left:2287px;top:1194px;width:105px;height:30px;line-height:28px"><span class="abs" style="left:6px;top:0">50 <span class="c">条</span>/<span class="c">页</span></span></div>
<svg class="abs" style="left:2368px;top:1204px" width="15" height="9" viewBox="0 0 15 9"><path d="M1.5 1.5L7.5 7.5L13.5 1.5" fill="none" stroke="#444" stroke-width="1.6"/></svg>
<div class="abs" style="left:2402px;top:1194px;line-height:32px"><span class="c">跳至</span></div>
<div class="inp" style="left:2448px;top:1194px;width:54px;height:30px"></div>
<div class="abs" style="left:2513px;top:1194px;line-height:32px"><span class="c">页</span></div>
<div class="abs" style="left:1225px;top:301px;width:312px;height:98px;background:rgba(0,0,0,0.75);border-radius:5px;box-shadow:0 3px 8px rgba(0,0,0,.12);color:#fff;padding:10.5px 0 0 10px;line-height:27.5px;font-size:17.5px;-webkit-text-stroke:0.25px #fff"><span class="c">商品销量数据仅供参考，并非实时销</span><br><span class="c">量数据，如需准确的商品销量数据，</span><br><span class="c">请前往商品分析进行查询</span></div>
<svg class="abs" style="left:1374px;top:295px" width="14" height="6" viewBox="0 0 14 6"><path d="M0.5 6.2L7 0.3L13.5 6.2Z" fill="rgba(0,0,0,0.75)"/></svg>
<div class="abs" style="left:2545px;top:95px;width:15px;height:1144px;background:#f0f1f4"></div>
<div class="abs" style="left:2523px;top:463px;width:40px;height:150px;background:#b3c2f8;border-radius:8px 0 0 8px"></div>
<svg class="abs" style="left:2532px;top:474px" width="20" height="18" viewBox="0 0 20 18"><path d="M2 1H18C18.6 1 19 1.4 19 2V12C19 12.6 18.6 13 18 13H12L10 15.5L8 13H2C1.4 13 1 12.6 1 12V2C1 1.4 1.4 1 2 1Z" fill="none" stroke="#fff" stroke-width="1.6"/><path d="M5.5 5H14.5M5.5 8.5H10" stroke="#fff" stroke-width="1.6"/></svg>
<div class="abs" style="left:2532px;top:497px;width:20px;line-height:28px;color:#fff;font-size:18px;-webkit-text-stroke:0.3px #fff"><span class="c">帮</span><br><span class="c">助</span><br><span class="c">中</span><br><span class="c">心</span></div>
<div class="abs" style="left:2523px;top:627px;width:40px;height:149px;background:#fff;border-radius:8px 0 0 8px;box-shadow:0 2px 8px rgba(0,0,0,.1)"></div>
<svg class="abs" style="left:2530px;top:663px" width="22" height="22" viewBox="0 0 22 22"><path d="M3.5 11.5V10C3.5 5.6 6.9 2 11 2C15.1 2 18.5 5.6 18.5 10V11.5" fill="none" stroke="#3d3f4a" stroke-width="1.8"/><rect x="1" y="10" width="3.2" height="6.5" rx="1.4" fill="#3d3f4a"/><rect x="17.8" y="10" width="3.2" height="6.5" rx="1.4" fill="#3d3f4a"/><path d="M18.5 16.5C18 19.5 15 21 11.5 21" fill="none" stroke="#3d3f4a" stroke-width="1.7"/><path d="M8.5 15C9.5 16 12 16 13 15" fill="none" stroke="#3d3f4a" stroke-width="1.6"/></svg>
<div class="abs" style="left:2532px;top:686px;width:20px;line-height:27px;color:#222;font-size:17px"><span class="c">客</span><br><span class="c">服</span></div>
<div class="abs" style="left:0;top:0;width:2560px;height:1239px;overflow:hidden;pointer-events:none">
<div class="abs" style="left:-269.0px;top:-204px;width:160px;height:30px;line-height:30px;text-align:center;font-size:23px;color:rgba(0,0,0,0.045);transform:rotate(-30deg);white-space:nowrap"><span class="c">苏尔银</span>9617</div>
<div class="abs" style="left:106.0px;top:-204px;width:160px;height:30px;line-height:30px;text-align:center;font-size:23px;color:rgba(0,0,0,0.045);transform:rotate(-30deg);white-space:nowrap"><span class="c">苏尔银</span>9617</div>
<div class="abs" style="left:481.0px;top:-204px;width:160px;height:30px;line-height:30px;text-align:center;font-size:23px;color:rgba(0,0,0,0.045);transform:rotate(-30deg);white-space:nowrap"><span class="c">苏尔银</span>9617</div>
<div class="abs" style="left:856.0px;top:-204px;width:160px;height:30px;line-height:30px;text-align:center;font-size:23px;color:rgba(0,0,0,0.045);transform:rotate(-30deg);white-space:nowrap"><span class="c">苏尔银</span>9617</div>
<div class="abs" style="left:1231.0px;top:-204px;width:160px;height:30px;line-height:30px;text-align:center;font-size:23px;color:rgba(0,0,0,0.045);transform:rotate(-30deg);white-space:nowrap"><span class="c">苏尔银</span>9617</div>
<div class="abs" style="left:1606.0px;top:-204px;width:160px;height:30px;line-height:30px;text-align:center;font-size:23px;color:rgba(0,0,0,0.045);transform:rotate(-30deg);white-space:nowrap"><span class="c">苏尔银</span>9617</div>
<div class="abs" style="left:1981.0px;top:-204px;width:160px;height:30px;line-height:30px;text-align:center;font-size:23px;color:rgba(0,0,0,0.045);transform:rotate(-30deg);white-space:nowrap"><span class="c">苏尔银</span>9617</div>
<div class="abs" style="left:2356.0px;top:-204px;width:160px;height:30px;line-height:30px;text-align:center;font-size:23px;color:rgba(0,0,0,0.045);transform:rotate(-30deg);white-space:nowrap"><span class="c">苏尔银</span>9617</div>
<div class="abs" style="left:2731.0px;top:-204px;width:160px;height:30px;line-height:30px;text-align:center;font-size:23px;color:rgba(0,0,0,0.045);transform:rotate(-30deg);white-space:nowrap"><span class="c">苏尔银</span>9617</div>
<div class="abs" style="left:-81.5px;top:-16px;width:160px;height:30px;line-height:30px;text-align:center;font-size:23px;color:rgba(0,0,0,0.045);transform:rotate(-30deg);white-space:nowrap"><span class="c">苏尔银</span>9617</div>
<div class="abs" style="left:293.5px;top:-16px;width:160px;height:30px;line-height:30px;text-align:center;font-size:23px;color:rgba(0,0,0,0.045);transform:rotate(-30deg);white-space:nowrap"><span class="c">苏尔银</span>9617</div>
<div class="abs" style="left:668.5px;top:-16px;width:160px;height:30px;line-height:30px;text-align:center;font-size:23px;color:rgba(0,0,0,0.045);transform:rotate(-30deg);white-space:nowrap"><span class="c">苏尔银</span>9617</div>
<div class="abs" style="left:1043.5px;top:-16px;width:160px;height:30px;line-height:30px;text-align:center;font-size:23px;color:rgba(0,0,0,0.045);transform:rotate(-30deg);white-space:nowrap"><span class="c">苏尔银</span>9617</div>
<div class="abs" style="left:1418.5px;top:-16px;width:160px;height:30px;line-height:30px;text-align:center;font-size:23px;color:rgba(0,0,0,0.045);transform:rotate(-30deg);white-space:nowrap"><span class="c">苏尔银</span>9617</div>
<div class="abs" style="left:1793.5px;top:-16px;width:160px;height:30px;line-height:30px;text-align:center;font-size:23px;color:rgba(0,0,0,0.045);transform:rotate(-30deg);white-space:nowrap"><span class="c">苏尔银</span>9617</div>
<div class="abs" style="left:2168.5px;top:-16px;width:160px;height:30px;line-height:30px;text-align:center;font-size:23px;color:rgba(0,0,0,0.045);transform:rotate(-30deg);white-space:nowrap"><span class="c">苏尔银</span>9617</div>
<div class="abs" style="left:2543.5px;top:-16px;width:160px;height:30px;line-height:30px;text-align:center;font-size:23px;color:rgba(0,0,0,0.045);transform:rotate(-30deg);white-space:nowrap"><span class="c">苏尔银</span>9617</div>
<div class="abs" style="left:2918.5px;top:-16px;width:160px;height:30px;line-height:30px;text-align:center;font-size:23px;color:rgba(0,0,0,0.045);transform:rotate(-30deg);white-space:nowrap"><span class="c">苏尔银</span>9617</div>
<div class="abs" style="left:-269.0px;top:172px;width:160px;height:30px;line-height:30px;text-align:center;font-size:23px;color:rgba(0,0,0,0.045);transform:rotate(-30deg);white-space:nowrap"><span class="c">苏尔银</span>9617</div>
<div class="abs" style="left:106.0px;top:172px;width:160px;height:30px;line-height:30px;text-align:center;font-size:23px;color:rgba(0,0,0,0.045);transform:rotate(-30deg);white-space:nowrap"><span class="c">苏尔银</span>9617</div>
<div class="abs" style="left:481.0px;top:172px;width:160px;height:30px;line-height:30px;text-align:center;font-size:23px;color:rgba(0,0,0,0.045);transform:rotate(-30deg);white-space:nowrap"><span class="c">苏尔银</span>9617</div>
<div class="abs" style="left:856.0px;top:172px;width:160px;height:30px;line-height:30px;text-align:center;font-size:23px;color:rgba(0,0,0,0.045);transform:rotate(-30deg);white-space:nowrap"><span class="c">苏尔银</span>9617</div>
<div class="abs" style="left:1231.0px;top:172px;width:160px;height:30px;line-height:30px;text-align:center;font-size:23px;color:rgba(0,0,0,0.045);transform:rotate(-30deg);white-space:nowrap"><span class="c">苏尔银</span>9617</div>
<div class="abs" style="left:1606.0px;top:172px;width:160px;height:30px;line-height:30px;text-align:center;font-size:23px;color:rgba(0,0,0,0.045);transform:rotate(-30deg);white-space:nowrap"><span class="c">苏尔银</span>9617</div>
<div class="abs" style="left:1981.0px;top:172px;width:160px;height:30px;line-height:30px;text-align:center;font-size:23px;color:rgba(0,0,0,0.045);transform:rotate(-30deg);white-space:nowrap"><span class="c">苏尔银</span>9617</div>
<div class="abs" style="left:2356.0px;top:172px;width:160px;height:30px;line-height:30px;text-align:center;font-size:23px;color:rgba(0,0,0,0.045);transform:rotate(-30deg);white-space:nowrap"><span class="c">苏尔银</span>9617</div>
<div class="abs" style="left:2731.0px;top:172px;width:160px;height:30px;line-height:30px;text-align:center;font-size:23px;color:rgba(0,0,0,0.045);transform:rotate(-30deg);white-space:nowrap"><span class="c">苏尔银</span>9617</div>
<div class="abs" style="left:-81.5px;top:360px;width:160px;height:30px;line-height:30px;text-align:center;font-size:23px;color:rgba(0,0,0,0.045);transform:rotate(-30deg);white-space:nowrap"><span class="c">苏尔银</span>9617</div>
<div class="abs" style="left:293.5px;top:360px;width:160px;height:30px;line-height:30px;text-align:center;font-size:23px;color:rgba(0,0,0,0.045);transform:rotate(-30deg);white-space:nowrap"><span class="c">苏尔银</span>9617</div>
<div class="abs" style="left:668.5px;top:360px;width:160px;height:30px;line-height:30px;text-align:center;font-size:23px;color:rgba(0,0,0,0.045);transform:rotate(-30deg);white-space:nowrap"><span class="c">苏尔银</span>9617</div>
<div class="abs" style="left:1043.5px;top:360px;width:160px;height:30px;line-height:30px;text-align:center;font-size:23px;color:rgba(0,0,0,0.045);transform:rotate(-30deg);white-space:nowrap"><span class="c">苏尔银</span>9617</div>
<div class="abs" style="left:1418.5px;top:360px;width:160px;height:30px;line-height:30px;text-align:center;font-size:23px;color:rgba(0,0,0,0.045);transform:rotate(-30deg);white-space:nowrap"><span class="c">苏尔银</span>9617</div>
<div class="abs" style="left:1793.5px;top:360px;width:160px;height:30px;line-height:30px;text-align:center;font-size:23px;color:rgba(0,0,0,0.045);transform:rotate(-30deg);white-space:nowrap"><span class="c">苏尔银</span>9617</div>
<div class="abs" style="left:2168.5px;top:360px;width:160px;height:30px;line-height:30px;text-align:center;font-size:23px;color:rgba(0,0,0,0.045);transform:rotate(-30deg);white-space:nowrap"><span class="c">苏尔银</span>9617</div>
<div class="abs" style="left:2543.5px;top:360px;width:160px;height:30px;line-height:30px;text-align:center;font-size:23px;color:rgba(0,0,0,0.045);transform:rotate(-30deg);white-space:nowrap"><span class="c">苏尔银</span>9617</div>
<div class="abs" style="left:2918.5px;top:360px;width:160px;height:30px;line-height:30px;text-align:center;font-size:23px;color:rgba(0,0,0,0.045);transform:rotate(-30deg);white-space:nowrap"><span class="c">苏尔银</span>9617</div>
<div class="abs" style="left:-269.0px;top:548px;width:160px;height:30px;line-height:30px;text-align:center;font-size:23px;color:rgba(0,0,0,0.045);transform:rotate(-30deg);white-space:nowrap"><span class="c">苏尔银</span>9617</div>
<div class="abs" style="left:106.0px;top:548px;width:160px;height:30px;line-height:30px;text-align:center;font-size:23px;color:rgba(0,0,0,0.045);transform:rotate(-30deg);white-space:nowrap"><span class="c">苏尔银</span>9617</div>
<div class="abs" style="left:481.0px;top:548px;width:160px;height:30px;line-height:30px;text-align:center;font-size:23px;color:rgba(0,0,0,0.045);transform:rotate(-30deg);white-space:nowrap"><span class="c">苏尔银</span>9617</div>
<div class="abs" style="left:856.0px;top:548px;width:160px;height:30px;line-height:30px;text-align:center;font-size:23px;color:rgba(0,0,0,0.045);transform:rotate(-30deg);white-space:nowrap"><span class="c">苏尔银</span>9617</div>
<div class="abs" style="left:1231.0px;top:548px;width:160px;height:30px;line-height:30px;text-align:center;font-size:23px;color:rgba(0,0,0,0.045);transform:rotate(-30deg);white-space:nowrap"><span class="c">苏尔银</span>9617</div>
<div class="abs" style="left:1606.0px;top:548px;width:160px;height:30px;line-height:30px;text-align:center;font-size:23px;color:rgba(0,0,0,0.045);transform:rotate(-30deg);white-space:nowrap"><span class="c">苏尔银</span>9617</div>
<div class="abs" style="left:1981.0px;top:548px;width:160px;height:30px;line-height:30px;text-align:center;font-size:23px;color:rgba(0,0,0,0.045);transform:rotate(-30deg);white-space:nowrap"><span class="c">苏尔银</span>9617</div>
<div class="abs" style="left:2356.0px;top:548px;width:160px;height:30px;line-height:30px;text-align:center;font-size:23px;color:rgba(0,0,0,0.045);transform:rotate(-30deg);white-space:nowrap"><span class="c">苏尔银</span>9617</div>
<div class="abs" style="left:2731.0px;top:548px;width:160px;height:30px;line-height:30px;text-align:center;font-size:23px;color:rgba(0,0,0,0.045);transform:rotate(-30deg);white-space:nowrap"><span class="c">苏尔银</span>9617</div>
<div class="abs" style="left:-81.5px;top:736px;width:160px;height:30px;line-height:30px;text-align:center;font-size:23px;color:rgba(0,0,0,0.045);transform:rotate(-30deg);white-space:nowrap"><span class="c">苏尔银</span>9617</div>
<div class="abs" style="left:293.5px;top:736px;width:160px;height:30px;line-height:30px;text-align:center;font-size:23px;color:rgba(0,0,0,0.045);transform:rotate(-30deg);white-space:nowrap"><span class="c">苏尔银</span>9617</div>
<div class="abs" style="left:668.5px;top:736px;width:160px;height:30px;line-height:30px;text-align:center;font-size:23px;color:rgba(0,0,0,0.045);transform:rotate(-30deg);white-space:nowrap"><span class="c">苏尔银</span>9617</div>
<div class="abs" style="left:1043.5px;top:736px;width:160px;height:30px;line-height:30px;text-align:center;font-size:23px;color:rgba(0,0,0,0.045);transform:rotate(-30deg);white-space:nowrap"><span class="c">苏尔银</span>9617</div>
<div class="abs" style="left:1418.5px;top:736px;width:160px;height:30px;line-height:30px;text-align:center;font-size:23px;color:rgba(0,0,0,0.045);transform:rotate(-30deg);white-space:nowrap"><span class="c">苏尔银</span>9617</div>
<div class="abs" style="left:1793.5px;top:736px;width:160px;height:30px;line-height:30px;text-align:center;font-size:23px;color:rgba(0,0,0,0.045);transform:rotate(-30deg);white-space:nowrap"><span class="c">苏尔银</span>9617</div>
<div class="abs" style="left:2168.5px;top:736px;width:160px;height:30px;line-height:30px;text-align:center;font-size:23px;color:rgba(0,0,0,0.045);transform:rotate(-30deg);white-space:nowrap"><span class="c">苏尔银</span>9617</div>
<div class="abs" style="left:2543.5px;top:736px;width:160px;height:30px;line-height:30px;text-align:center;font-size:23px;color:rgba(0,0,0,0.045);transform:rotate(-30deg);white-space:nowrap"><span class="c">苏尔银</span>9617</div>
<div class="abs" style="left:2918.5px;top:736px;width:160px;height:30px;line-height:30px;text-align:center;font-size:23px;color:rgba(0,0,0,0.045);transform:rotate(-30deg);white-space:nowrap"><span class="c">苏尔银</span>9617</div>
<div class="abs" style="left:-269.0px;top:924px;width:160px;height:30px;line-height:30px;text-align:center;font-size:23px;color:rgba(0,0,0,0.045);transform:rotate(-30deg);white-space:nowrap"><span class="c">苏尔银</span>9617</div>
<div class="abs" style="left:106.0px;top:924px;width:160px;height:30px;line-height:30px;text-align:center;font-size:23px;color:rgba(0,0,0,0.045);transform:rotate(-30deg);white-space:nowrap"><span class="c">苏尔银</span>9617</div>
<div class="abs" style="left:481.0px;top:924px;width:160px;height:30px;line-height:30px;text-align:center;font-size:23px;color:rgba(0,0,0,0.045);transform:rotate(-30deg);white-space:nowrap"><span class="c">苏尔银</span>9617</div>
<div class="abs" style="left:856.0px;top:924px;width:160px;height:30px;line-height:30px;text-align:center;font-size:23px;color:rgba(0,0,0,0.045);transform:rotate(-30deg);white-space:nowrap"><span class="c">苏尔银</span>9617</div>
<div class="abs" style="left:1231.0px;top:924px;width:160px;height:30px;line-height:30px;text-align:center;font-size:23px;color:rgba(0,0,0,0.045);transform:rotate(-30deg);white-space:nowrap"><span class="c">苏尔银</span>9617</div>
<div class="abs" style="left:1606.0px;top:924px;width:160px;height:30px;line-height:30px;text-align:center;font-size:23px;color:rgba(0,0,0,0.045);transform:rotate(-30deg);white-space:nowrap"><span class="c">苏尔银</span>9617</div>
<div class="abs" style="left:1981.0px;top:924px;width:160px;height:30px;line-height:30px;text-align:center;font-size:23px;color:rgba(0,0,0,0.045);transform:rotate(-30deg);white-space:nowrap"><span class="c">苏尔银</span>9617</div>
<div class="abs" style="left:2356.0px;top:924px;width:160px;height:30px;line-height:30px;text-align:center;font-size:23px;color:rgba(0,0,0,0.045);transform:rotate(-30deg);white-space:nowrap"><span class="c">苏尔银</span>9617</div>
<div class="abs" style="left:2731.0px;top:924px;width:160px;height:30px;line-height:30px;text-align:center;font-size:23px;color:rgba(0,0,0,0.045);transform:rotate(-30deg);white-space:nowrap"><span class="c">苏尔银</span>9617</div>
<div class="abs" style="left:-81.5px;top:1112px;width:160px;height:30px;line-height:30px;text-align:center;font-size:23px;color:rgba(0,0,0,0.045);transform:rotate(-30deg);white-space:nowrap"><span class="c">苏尔银</span>9617</div>
<div class="abs" style="left:293.5px;top:1112px;width:160px;height:30px;line-height:30px;text-align:center;font-size:23px;color:rgba(0,0,0,0.045);transform:rotate(-30deg);white-space:nowrap"><span class="c">苏尔银</span>9617</div>
<div class="abs" style="left:668.5px;top:1112px;width:160px;height:30px;line-height:30px;text-align:center;font-size:23px;color:rgba(0,0,0,0.045);transform:rotate(-30deg);white-space:nowrap"><span class="c">苏尔银</span>9617</div>
<div class="abs" style="left:1043.5px;top:1112px;width:160px;height:30px;line-height:30px;text-align:center;font-size:23px;color:rgba(0,0,0,0.045);transform:rotate(-30deg);white-space:nowrap"><span class="c">苏尔银</span>9617</div>
<div class="abs" style="left:1418.5px;top:1112px;width:160px;height:30px;line-height:30px;text-align:center;font-size:23px;color:rgba(0,0,0,0.045);transform:rotate(-30deg);white-space:nowrap"><span class="c">苏尔银</span>9617</div>
<div class="abs" style="left:1793.5px;top:1112px;width:160px;height:30px;line-height:30px;text-align:center;font-size:23px;color:rgba(0,0,0,0.045);transform:rotate(-30deg);white-space:nowrap"><span class="c">苏尔银</span>9617</div>
<div class="abs" style="left:2168.5px;top:1112px;width:160px;height:30px;line-height:30px;text-align:center;font-size:23px;color:rgba(0,0,0,0.045);transform:rotate(-30deg);white-space:nowrap"><span class="c">苏尔银</span>9617</div>
<div class="abs" style="left:2543.5px;top:1112px;width:160px;height:30px;line-height:30px;text-align:center;font-size:23px;color:rgba(0,0,0,0.045);transform:rotate(-30deg);white-space:nowrap"><span class="c">苏尔银</span>9617</div>
<div class="abs" style="left:2918.5px;top:1112px;width:160px;height:30px;line-height:30px;text-align:center;font-size:23px;color:rgba(0,0,0,0.045);transform:rotate(-30deg);white-space:nowrap"><span class="c">苏尔银</span>9617</div>
<div class="abs" style="left:-269.0px;top:1300px;width:160px;height:30px;line-height:30px;text-align:center;font-size:23px;color:rgba(0,0,0,0.045);transform:rotate(-30deg);white-space:nowrap"><span class="c">苏尔银</span>9617</div>
<div class="abs" style="left:106.0px;top:1300px;width:160px;height:30px;line-height:30px;text-align:center;font-size:23px;color:rgba(0,0,0,0.045);transform:rotate(-30deg);white-space:nowrap"><span class="c">苏尔银</span>9617</div>
<div class="abs" style="left:481.0px;top:1300px;width:160px;height:30px;line-height:30px;text-align:center;font-size:23px;color:rgba(0,0,0,0.045);transform:rotate(-30deg);white-space:nowrap"><span class="c">苏尔银</span>9617</div>
<div class="abs" style="left:856.0px;top:1300px;width:160px;height:30px;line-height:30px;text-align:center;font-size:23px;color:rgba(0,0,0,0.045);transform:rotate(-30deg);white-space:nowrap"><span class="c">苏尔银</span>9617</div>
<div class="abs" style="left:1231.0px;top:1300px;width:160px;height:30px;line-height:30px;text-align:center;font-size:23px;color:rgba(0,0,0,0.045);transform:rotate(-30deg);white-space:nowrap"><span class="c">苏尔银</span>9617</div>
<div class="abs" style="left:1606.0px;top:1300px;width:160px;height:30px;line-height:30px;text-align:center;font-size:23px;color:rgba(0,0,0,0.045);transform:rotate(-30deg);white-space:nowrap"><span class="c">苏尔银</span>9617</div>
<div class="abs" style="left:1981.0px;top:1300px;width:160px;height:30px;line-height:30px;text-align:center;font-size:23px;color:rgba(0,0,0,0.045);transform:rotate(-30deg);white-space:nowrap"><span class="c">苏尔银</span>9617</div>
<div class="abs" style="left:2356.0px;top:1300px;width:160px;height:30px;line-height:30px;text-align:center;font-size:23px;color:rgba(0,0,0,0.045);transform:rotate(-30deg);white-space:nowrap"><span class="c">苏尔银</span>9617</div>
<div class="abs" style="left:2731.0px;top:1300px;width:160px;height:30px;line-height:30px;text-align:center;font-size:23px;color:rgba(0,0,0,0.045);transform:rotate(-30deg);white-space:nowrap"><span class="c">苏尔银</span>9617</div>
<div class="abs" style="left:-81.5px;top:1488px;width:160px;height:30px;line-height:30px;text-align:center;font-size:23px;color:rgba(0,0,0,0.045);transform:rotate(-30deg);white-space:nowrap"><span class="c">苏尔银</span>9617</div>
<div class="abs" style="left:293.5px;top:1488px;width:160px;height:30px;line-height:30px;text-align:center;font-size:23px;color:rgba(0,0,0,0.045);transform:rotate(-30deg);white-space:nowrap"><span class="c">苏尔银</span>9617</div>
<div class="abs" style="left:668.5px;top:1488px;width:160px;height:30px;line-height:30px;text-align:center;font-size:23px;color:rgba(0,0,0,0.045);transform:rotate(-30deg);white-space:nowrap"><span class="c">苏尔银</span>9617</div>
<div class="abs" style="left:1043.5px;top:1488px;width:160px;height:30px;line-height:30px;text-align:center;font-size:23px;color:rgba(0,0,0,0.045);transform:rotate(-30deg);white-space:nowrap"><span class="c">苏尔银</span>9617</div>
<div class="abs" style="left:1418.5px;top:1488px;width:160px;height:30px;line-height:30px;text-align:center;font-size:23px;color:rgba(0,0,0,0.045);transform:rotate(-30deg);white-space:nowrap"><span class="c">苏尔银</span>9617</div>
<div class="abs" style="left:1793.5px;top:1488px;width:160px;height:30px;line-height:30px;text-align:center;font-size:23px;color:rgba(0,0,0,0.045);transform:rotate(-30deg);white-space:nowrap"><span class="c">苏尔银</span>9617</div>
<div class="abs" style="left:2168.5px;top:1488px;width:160px;height:30px;line-height:30px;text-align:center;font-size:23px;color:rgba(0,0,0,0.045);transform:rotate(-30deg);white-space:nowrap"><span class="c">苏尔银</span>9617</div>
<div class="abs" style="left:2543.5px;top:1488px;width:160px;height:30px;line-height:30px;text-align:center;font-size:23px;color:rgba(0,0,0,0.045);transform:rotate(-30deg);white-space:nowrap"><span class="c">苏尔银</span>9617</div>
<div class="abs" style="left:2918.5px;top:1488px;width:160px;height:30px;line-height:30px;text-align:center;font-size:23px;color:rgba(0,0,0,0.045);transform:rotate(-30deg);white-space:nowrap"><span class="c">苏尔银</span>9617</div>
<div class="abs" style="left:-269.0px;top:1676px;width:160px;height:30px;line-height:30px;text-align:center;font-size:23px;color:rgba(0,0,0,0.045);transform:rotate(-30deg);white-space:nowrap"><span class="c">苏尔银</span>9617</div>
<div class="abs" style="left:106.0px;top:1676px;width:160px;height:30px;line-height:30px;text-align:center;font-size:23px;color:rgba(0,0,0,0.045);transform:rotate(-30deg);white-space:nowrap"><span class="c">苏尔银</span>9617</div>
<div class="abs" style="left:481.0px;top:1676px;width:160px;height:30px;line-height:30px;text-align:center;font-size:23px;color:rgba(0,0,0,0.045);transform:rotate(-30deg);white-space:nowrap"><span class="c">苏尔银</span>9617</div>
<div class="abs" style="left:856.0px;top:1676px;width:160px;height:30px;line-height:30px;text-align:center;font-size:23px;color:rgba(0,0,0,0.045);transform:rotate(-30deg);white-space:nowrap"><span class="c">苏尔银</span>9617</div>
<div class="abs" style="left:1231.0px;top:1676px;width:160px;height:30px;line-height:30px;text-align:center;font-size:23px;color:rgba(0,0,0,0.045);transform:rotate(-30deg);white-space:nowrap"><span class="c">苏尔银</span>9617</div>
<div class="abs" style="left:1606.0px;top:1676px;width:160px;height:30px;line-height:30px;text-align:center;font-size:23px;color:rgba(0,0,0,0.045);transform:rotate(-30deg);white-space:nowrap"><span class="c">苏尔银</span>9617</div>
<div class="abs" style="left:1981.0px;top:1676px;width:160px;height:30px;line-height:30px;text-align:center;font-size:23px;color:rgba(0,0,0,0.045);transform:rotate(-30deg);white-space:nowrap"><span class="c">苏尔银</span>9617</div>
<div class="abs" style="left:2356.0px;top:1676px;width:160px;height:30px;line-height:30px;text-align:center;font-size:23px;color:rgba(0,0,0,0.045);transform:rotate(-30deg);white-space:nowrap"><span class="c">苏尔银</span>9617</div>
<div class="abs" style="left:2731.0px;top:1676px;width:160px;height:30px;line-height:30px;text-align:center;font-size:23px;color:rgba(0,0,0,0.045);transform:rotate(-30deg);white-space:nowrap"><span class="c">苏尔银</span>9617</div>
</div>
</body></html>
